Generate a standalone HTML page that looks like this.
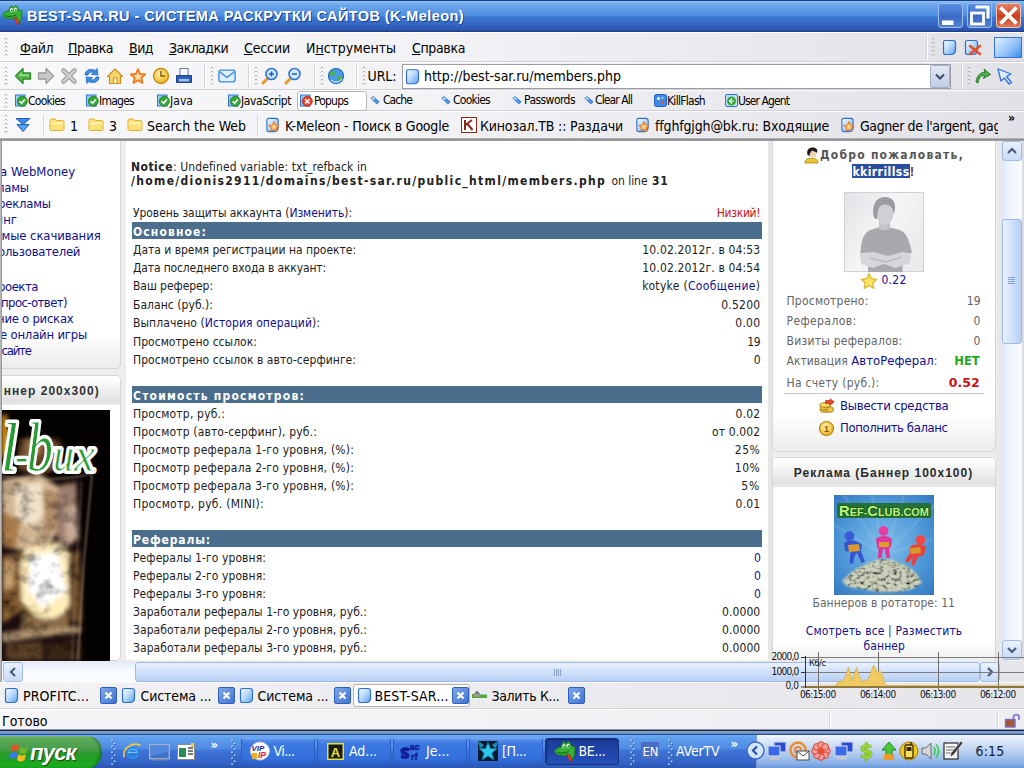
<!DOCTYPE html>
<html lang="ru"><head><meta charset="utf-8"><title>BEST-SAR.RU - СИСТЕМА РАСКРУТКИ САЙТОВ (K-Meleon)</title>
<style>
html,body{margin:0;padding:0;width:1024px;height:768px;overflow:hidden;background:#f1f1f1;}
body{position:relative;font-family:"DejaVu Sans Condensed","Liberation Sans",sans-serif;}
div,svg,span.t{position:absolute;}
span.t{white-space:pre;}
a{color:#10108a;text-decoration:none;}
u{text-decoration:underline;}
</style></head><body>
<div style="left:0px;top:0px;width:1024px;height:32px;background:linear-gradient(#1a3f8a 0,#1a3f8a .8px,#8ec2f8 1px,#78b2ea 3px,#6aa2ea 6px,#5a98e6 11px,#4c8ee0 16px,#3b78d0 17px,#3870ca 21px,#3364c2 25px,#2e58b2 29px,#2850a6 30.500px,#1e3f8e 31px,#1e3f8e 32px);"></div>
<div style="left:0px;top:32px;width:1024px;height:1px;background:#fff;z-index:1;"></div>
<svg style="left:2px;top:5px;" width="21" height="20" viewBox="0 0 21 20"><path d="M0.500 9.500 C2 7.500 4.500 6 7 5.500 L8 2 L10 .8 L11.500 3 L13.500 .5 L15.500 2 L16 4.500 L20 5.500 L19.500 13 L17.500 18 L14.500 13 L9 14 L4 13 C2 12.500 1 11 0.500 9.500Z" fill="#35b035" stroke="#1f7a1f" stroke-width=".9" stroke-linejoin="round"/><path d="M12 12.500 L14.500 12.500 L17.500 19 L15 19.500Z" fill="#e0452f" stroke="#8a2416" stroke-width=".6"/><ellipse cx="9.500" cy="5" rx="1.500" ry="1.900" fill="#eaffea"/><ellipse cx="13.500" cy="4.500" rx="1.500" ry="1.900" fill="#eaffea"/><circle cx="9.800" cy="5.500" r=".8" fill="#0a3a0a"/><circle cx="13.800" cy="5" r=".8" fill="#0a3a0a"/><path d="M3 10.500 C6 12 10 12 14 10" fill="none" stroke="#0f5a0f" stroke-width=".9"/></svg>
<span class="t" style='left:27.00px;top:6.48px;font-size:14.5px;line-height:20px;color:#fff;font-weight:700;font-family:"Liberation Sans",sans-serif;letter-spacing:0.429px;text-shadow:1px 1px 0 #1a3f8f;'>BEST-SAR.RU - СИСТЕМА РАСКРУТКИ САЙТОВ (K-Meleon)</span>
<div style="left:938px;top:3px;width:25px;height:25px;border-radius:3px;border:1px solid #9dbdf0;box-sizing:border-box;background:linear-gradient(#5c8fe0,#3f72cc 45%,#3a6ac4 55%,#5484d4);"></div>
<svg style="left:938px;top:3px;" width="25" height="25" viewBox="0 0 25 25"><rect x="4" y="17.500" width="11.500" height="4.500" fill="#fff"/></svg>
<div style="left:967px;top:3px;width:25px;height:25px;border-radius:3px;border:1px solid #9dbdf0;box-sizing:border-box;background:linear-gradient(#5c8fe0,#3f72cc 45%,#3a6ac4 55%,#5484d4);"></div>
<svg style="left:967px;top:3px;" width="25" height="25" viewBox="0 0 25 25"><path d="M8.500 4 H21 V15.500" fill="none" stroke="#fff" stroke-width="3.200"/><rect x="4.500" y="10" width="12" height="11" fill="none" stroke="#fff" stroke-width="2.800"/></svg>
<div style="left:996px;top:3px;width:25px;height:25px;border-radius:3px;border:1px solid #f0c0b0;box-sizing:border-box;background:linear-gradient(#e0836a,#cf4a2c 45%,#c8401f 55%,#dd7a5c);"></div>
<svg style="left:996px;top:3px;" width="25" height="25" viewBox="0 0 25 25"><path d="M4.500 4.500 L20.500 20.500 M20.500 4.500 L4.500 20.500" stroke="#fff" stroke-width="3.800" stroke-linecap="butt"/></svg>
<div style="left:0px;top:32px;width:1024px;height:106px;background:linear-gradient(90deg,#f8f8fa 0,#f3f3f6 40%,#e9e8ed 75%,#e2e1e7 100%);"></div>
<div style="left:0px;top:61px;width:1024px;height:1px;background:#cfcfd4;"></div>
<div style="left:0px;top:62px;width:1024px;height:1px;background:#fcfcfd;"></div>
<div style="left:0px;top:89px;width:1024px;height:1px;background:#cfcfd4;"></div>
<div style="left:0px;top:90px;width:1024px;height:1px;background:#fcfcfd;"></div>
<div style="left:0px;top:110px;width:1024px;height:1px;background:#cfcfd4;"></div>
<div style="left:0px;top:111px;width:1024px;height:1px;background:#fcfcfd;"></div>
<svg style="left:4px;top:37px;" width="4" height="22" viewBox="0 0 4 22"><path d="M0.5 2.5 L2 1 L3.5 2.5" fill="none" stroke="#b4b0aa" stroke-width="1"/><path d="M0.5 6.5 L2 5 L3.5 6.5" fill="none" stroke="#b4b0aa" stroke-width="1"/><path d="M0.5 10.5 L2 9 L3.5 10.5" fill="none" stroke="#b4b0aa" stroke-width="1"/><path d="M0.5 14.5 L2 13 L3.5 14.5" fill="none" stroke="#b4b0aa" stroke-width="1"/><path d="M0.5 18.5 L2 17 L3.5 18.5" fill="none" stroke="#b4b0aa" stroke-width="1"/></svg>
<span class="t" style='left:20.00px;top:37.85px;font-size:14px;line-height:20px;color:#000;letter-spacing:-0.449px;'><u>Ф</u>айл</span>
<span class="t" style='left:68.00px;top:37.85px;font-size:14px;line-height:20px;color:#000;letter-spacing:-0.492px;'><u>П</u>равка</span>
<span class="t" style='left:129.00px;top:37.85px;font-size:14px;line-height:20px;color:#000;letter-spacing:-0.516px;'><u>В</u>ид</span>
<span class="t" style='left:169.00px;top:37.85px;font-size:14px;line-height:20px;color:#000;letter-spacing:-0.586px;'><u>З</u>акладки</span>
<span class="t" style='left:244.00px;top:37.85px;font-size:14px;line-height:20px;color:#000;letter-spacing:-0.130px;'><u>С</u>ессии</span>
<span class="t" style='left:306.00px;top:37.85px;font-size:14px;line-height:20px;color:#000;letter-spacing:-0.014px;'>И<u>н</u>струменты</span>
<span class="t" style='left:412.00px;top:37.85px;font-size:14px;line-height:20px;color:#000;letter-spacing:-0.359px;'><u>С</u>правка</span>
<div style="left:926px;top:34px;width:1px;height:26px;background:#d6d6da;"></div>
<div style="left:927px;top:34px;width:1px;height:26px;background:#fdfdfe;"></div>
<svg style="left:931px;top:37px;" width="4" height="22" viewBox="0 0 4 22"><path d="M0.5 2.5 L2 1 L3.5 2.5" fill="none" stroke="#b4b0aa" stroke-width="1"/><path d="M0.5 6.5 L2 5 L3.5 6.5" fill="none" stroke="#b4b0aa" stroke-width="1"/><path d="M0.5 10.5 L2 9 L3.5 10.5" fill="none" stroke="#b4b0aa" stroke-width="1"/><path d="M0.5 14.5 L2 13 L3.5 14.5" fill="none" stroke="#b4b0aa" stroke-width="1"/><path d="M0.5 18.5 L2 17 L3.5 18.5" fill="none" stroke="#b4b0aa" stroke-width="1"/></svg>
<svg width="0" height="0" style="left:0;top:0"><defs><linearGradient id="pg" x1="0" y1="0" x2="1" y2="1"><stop offset="0" stop-color="#f6fbff"/><stop offset="0.45" stop-color="#bedcfa"/><stop offset="1" stop-color="#5aa2ee"/></linearGradient><linearGradient id="bl" x1="0" y1="0" x2="1" y2="1"><stop offset="0" stop-color="#e8f3ff"/><stop offset="0.6" stop-color="#8fc0f6"/><stop offset="1" stop-color="#3f8be8"/></linearGradient><radialGradient id="gold" cx="0.4" cy="0.35" r="0.7"><stop offset="0" stop-color="#fff3a8"/><stop offset="1" stop-color="#e8ae1c"/></radialGradient></defs></svg>
<svg style="left:941.5px;top:38.5px;" width="15" height="17" viewBox="0 0 15 17"><path d="M3.5 1.5 H11 Q13.5 1.5 13.5 4 V11 Q13.5 15.5 9 15.5 H3.5 Q1.5 15.5 1.5 13.5 V3.5 Q1.5 1.5 3.5 1.5Z" fill="url(#pg)" stroke="#2f6fd0" stroke-width="1.2"/></svg>
<svg style="left:963.5px;top:38.5px;" width="15" height="17" viewBox="0 0 15 17"><path d="M3.5 1.5 H11 Q13.5 1.5 13.5 4 V11 Q13.5 15.5 9 15.5 H3.5 Q1.5 15.5 1.5 13.5 V3.5 Q1.5 1.5 3.5 1.5Z" fill="url(#pg)" stroke="#2f6fd0" stroke-width="1.2"/></svg>
<svg style="left:968px;top:44px;" width="14" height="12" viewBox="0 0 14 12"><path d="M2 2 L12 10 M12 2 L2 10" stroke="#e8502a" stroke-width="2.6" stroke-linecap="round"/></svg>
<div style="left:994px;top:37px;width:28px;height:21px;background:linear-gradient(135deg,#e4f1ff,#8ec0f8 60%,#3f8cec);border:1px solid #2f74d8;box-sizing:border-box;"></div>
<svg style="left:4px;top:66px;" width="4" height="22" viewBox="0 0 4 22"><path d="M0.5 2.5 L2 1 L3.5 2.5" fill="none" stroke="#b4b0aa" stroke-width="1"/><path d="M0.5 6.5 L2 5 L3.5 6.5" fill="none" stroke="#b4b0aa" stroke-width="1"/><path d="M0.5 10.5 L2 9 L3.5 10.5" fill="none" stroke="#b4b0aa" stroke-width="1"/><path d="M0.5 14.5 L2 13 L3.5 14.5" fill="none" stroke="#b4b0aa" stroke-width="1"/><path d="M0.5 18.5 L2 17 L3.5 18.5" fill="none" stroke="#b4b0aa" stroke-width="1"/></svg>
<svg style="left:14px;top:67px;" width="18" height="18" viewBox="0 0 18 18"><path d="M1.5 9 L9 1.5 V6 H16.5 V12 H9 V16.5Z" fill="#55b84a" stroke="#2e8a2a" stroke-width="1.3" stroke-linejoin="round"/><path d="M4 9 L8 5 V7.3 H15 V9Z" fill="#a6e49a" opacity=".8"/></svg>
<svg style="left:37px;top:67px;" width="18" height="18" viewBox="0 0 18 18"><path d="M16.5 9 L9 1.5 V6 H1.5 V12 H9 V16.5Z" fill="#c9c9c9" stroke="#9c9c9c" stroke-width="1.3" stroke-linejoin="round"/></svg>
<svg style="left:60px;top:67px;" width="18" height="18" viewBox="0 0 18 18"><path d="M3.500 3.500 L14.500 14.500 M14.500 3.500 L3.500 14.500" stroke="#a2a2a2" stroke-width="4.600" stroke-linecap="round"/><path d="M3.500 3.500 L14.500 14.500 M14.500 3.500 L3.500 14.500" stroke="#cfcfcf" stroke-width="2.400" stroke-linecap="round"/></svg>
<svg style="left:83px;top:67px;" width="18" height="18" viewBox="0 0 18 18"><path d="M2 8 C2 3 8 1 12 3.5 L14 1.5 L15 8 L8.5 7.5 L10.5 5.5 C8 4.5 5.5 5.5 5 8Z" fill="#3c8ee6" stroke="#1f63c2" stroke-width=".8"/><path d="M16 10 C16 15 10 17 6 14.5 L4 16.5 L3 10 L9.500 10.5 L7.500 12.5 C10 13.500 12.5 12.5 13 10Z" fill="#3c8ee6" stroke="#1f63c2" stroke-width=".8"/></svg>
<svg style="left:106px;top:67px;" width="18" height="18" viewBox="0 0 18 18"><path d="M1.500 9.500 L9 2 L16.5 9.500 H14.5 V16.5 H3.500 V9.500Z" fill="#f7d46a" stroke="#c8901a" stroke-width="1.2" stroke-linejoin="round"/><rect x="7.500" y="11" width="3.500" height="5.500" fill="#fff4c8" stroke="#c8901a" stroke-width="1"/></svg>
<svg style="left:129px;top:67px;" width="18" height="18" viewBox="0 0 18 18"><path d="M9 2.200 L11 7 L16.200 7.400 L12.300 10.800 L13.500 15.900 L9 13.200 L4.500 15.900 L5.700 10.800 L1.800 7.400 L7 7Z" fill="#ffdcae" stroke="#f07a1c" stroke-width="1.900" stroke-linejoin="round"/></svg>
<svg style="left:152px;top:67px;" width="18" height="18" viewBox="0 0 18 18"><circle cx="9" cy="9" r="7.500" fill="url(#gold)" stroke="#c88a10" stroke-width="1.300"/><path d="M9 4 V9 H13" fill="none" stroke="#8a5a08" stroke-width="1.500"/></svg>
<svg style="left:175px;top:67px;" width="18" height="18" viewBox="0 0 18 18"><rect x="5" y="1.500" width="8" height="7" fill="#fff" stroke="#5a7ab0" stroke-width="1"/><path d="M1.500 8.500 H16.500 V15.500 H1.500Z" fill="#2f5fb8" stroke="#1c3f8a" stroke-width="1"/><rect x="4" y="12" width="10" height="2.500" fill="#9fc0f0"/></svg>
<div style="left:204px;top:64px;width:1px;height:24px;background:#d6d6da;"></div>
<div style="left:205px;top:64px;width:1px;height:24px;background:#fdfdfe;"></div>
<svg style="left:210px;top:66px;" width="4" height="22" viewBox="0 0 4 22"><path d="M0.5 2.5 L2 1 L3.5 2.5" fill="none" stroke="#b4b0aa" stroke-width="1"/><path d="M0.5 6.5 L2 5 L3.5 6.5" fill="none" stroke="#b4b0aa" stroke-width="1"/><path d="M0.5 10.5 L2 9 L3.5 10.5" fill="none" stroke="#b4b0aa" stroke-width="1"/><path d="M0.5 14.5 L2 13 L3.5 14.5" fill="none" stroke="#b4b0aa" stroke-width="1"/><path d="M0.5 18.5 L2 17 L3.5 18.5" fill="none" stroke="#b4b0aa" stroke-width="1"/></svg>
<svg style="left:218px;top:69px;" width="18" height="14" viewBox="0 0 20 15"><rect x="1" y="1" width="18" height="13" rx="2.500" fill="#dff0ff" stroke="#3a8ae6" stroke-width="1.500"/><path d="M2 3 L10 9 L18 3" fill="none" stroke="#3a8ae6" stroke-width="1.400"/></svg>
<div style="left:248px;top:64px;width:1px;height:24px;background:#d6d6da;"></div>
<div style="left:249px;top:64px;width:1px;height:24px;background:#fdfdfe;"></div>
<svg style="left:254px;top:66px;" width="4" height="22" viewBox="0 0 4 22"><path d="M0.5 2.5 L2 1 L3.5 2.5" fill="none" stroke="#b4b0aa" stroke-width="1"/><path d="M0.5 6.5 L2 5 L3.5 6.5" fill="none" stroke="#b4b0aa" stroke-width="1"/><path d="M0.5 10.5 L2 9 L3.5 10.5" fill="none" stroke="#b4b0aa" stroke-width="1"/><path d="M0.5 14.5 L2 13 L3.5 14.5" fill="none" stroke="#b4b0aa" stroke-width="1"/><path d="M0.5 18.5 L2 17 L3.5 18.5" fill="none" stroke="#b4b0aa" stroke-width="1"/></svg>
<svg style="left:261px;top:67px;" width="18" height="18" viewBox="0 0 18 18"><path d="M6.500 11.500 L2 16" stroke="#e89a28" stroke-width="3" stroke-linecap="round"/><circle cx="10.500" cy="7" r="5.500" fill="#d4e8fc" stroke="#2f74d8" stroke-width="1.600"/><path d="M8 7 H13" stroke="#1f5fc2" stroke-width="1.600"/><path d="M10.500 4.500 V9.500" stroke="#1f5fc2" stroke-width="1.600"/></svg>
<svg style="left:284px;top:67px;" width="18" height="18" viewBox="0 0 18 18"><path d="M6.500 11.500 L2 16" stroke="#e89a28" stroke-width="3" stroke-linecap="round"/><circle cx="10.500" cy="7" r="5.500" fill="#d4e8fc" stroke="#2f74d8" stroke-width="1.600"/><path d="M8 7 H13" stroke="#1f5fc2" stroke-width="1.600"/></svg>
<div style="left:314px;top:64px;width:1px;height:24px;background:#d6d6da;"></div>
<div style="left:315px;top:64px;width:1px;height:24px;background:#fdfdfe;"></div>
<svg style="left:320px;top:66px;" width="4" height="22" viewBox="0 0 4 22"><path d="M0.5 2.5 L2 1 L3.5 2.5" fill="none" stroke="#b4b0aa" stroke-width="1"/><path d="M0.5 6.5 L2 5 L3.5 6.5" fill="none" stroke="#b4b0aa" stroke-width="1"/><path d="M0.5 10.5 L2 9 L3.5 10.5" fill="none" stroke="#b4b0aa" stroke-width="1"/><path d="M0.5 14.5 L2 13 L3.5 14.5" fill="none" stroke="#b4b0aa" stroke-width="1"/><path d="M0.5 18.5 L2 17 L3.5 18.5" fill="none" stroke="#b4b0aa" stroke-width="1"/></svg>
<svg style="left:327px;top:67px;" width="18" height="18" viewBox="0 0 18 18"><circle cx="9" cy="9" r="7.500" fill="#4a9ae8" stroke="#1f63c2" stroke-width="1.200"/><path d="M5 4 C8 3 9 6 7 8 C5 9 4 8 3 10 C2 7 3 5 5 4Z M10 9 C13 8 15 10 14 13 C12 15 10 14 10 12Z" fill="#4fb04a"/><path d="M4 13 C7 16 12 16 15 12" fill="none" stroke="#bfe0ff" stroke-width="1.200"/></svg>
<div style="left:356px;top:64px;width:1px;height:24px;background:#d6d6da;"></div>
<div style="left:357px;top:64px;width:1px;height:24px;background:#fdfdfe;"></div>
<svg style="left:362px;top:66px;" width="4" height="22" viewBox="0 0 4 22"><path d="M0.5 2.5 L2 1 L3.5 2.5" fill="none" stroke="#b4b0aa" stroke-width="1"/><path d="M0.5 6.5 L2 5 L3.5 6.5" fill="none" stroke="#b4b0aa" stroke-width="1"/><path d="M0.5 10.5 L2 9 L3.5 10.5" fill="none" stroke="#b4b0aa" stroke-width="1"/><path d="M0.5 14.5 L2 13 L3.5 14.5" fill="none" stroke="#b4b0aa" stroke-width="1"/><path d="M0.5 18.5 L2 17 L3.5 18.5" fill="none" stroke="#b4b0aa" stroke-width="1"/></svg>
<span class="t" style='left:367.50px;top:66.15px;font-size:14px;line-height:20px;color:#000;letter-spacing:-0.059px;'>URL:</span>
<div style="left:402px;top:63.5px;width:549px;height:25.5px;background:#fff;border:1px solid #9c9ca8;box-sizing:border-box;"></div>
<svg style="left:405px;top:67.5px;" width="15" height="17.5" viewBox="0 0 15 17"><path d="M3.5 1.5 H11 Q13.5 1.5 13.5 4 V11 Q13.5 15.5 9 15.5 H3.5 Q1.5 15.5 1.5 13.5 V3.5 Q1.5 1.5 3.5 1.5Z" fill="url(#pg)" stroke="#2f6fd0" stroke-width="1.2"/></svg>
<span class="t" style='left:424.00px;top:66.35px;font-size:14px;line-height:20px;color:#000;letter-spacing:-0.024px;'>http://best-sar.ru/members.php</span>
<div style="left:930px;top:65px;width:20px;height:23px;background:linear-gradient(#e2e8f4,#c2cee4);border:1px solid #a4b2cc;box-sizing:border-box;border-radius:2px;"></div>
<svg style="left:930px;top:66px;" width="20" height="21" viewBox="0 0 20 21"><path d="M6 8.500 L10 12.500 L14 8.500" fill="none" stroke="#3a4a6a" stroke-width="2"/></svg>
<div style="left:961px;top:64px;width:1px;height:24px;background:#d6d6da;"></div>
<div style="left:962px;top:64px;width:1px;height:24px;background:#fdfdfe;"></div>
<svg style="left:967px;top:66px;" width="4" height="22" viewBox="0 0 4 22"><path d="M0.5 2.5 L2 1 L3.5 2.5" fill="none" stroke="#b4b0aa" stroke-width="1"/><path d="M0.5 6.5 L2 5 L3.5 6.5" fill="none" stroke="#b4b0aa" stroke-width="1"/><path d="M0.5 10.5 L2 9 L3.5 10.5" fill="none" stroke="#b4b0aa" stroke-width="1"/><path d="M0.5 14.5 L2 13 L3.5 14.5" fill="none" stroke="#b4b0aa" stroke-width="1"/><path d="M0.5 18.5 L2 17 L3.5 18.5" fill="none" stroke="#b4b0aa" stroke-width="1"/></svg>
<svg style="left:974px;top:67px;" width="18" height="18" viewBox="0 0 18 18"><path d="M2 15 C3 8 7 5 11 5.500 L10 2 L16.500 7.500 L9.500 11.500 L10.500 8.500 C7 8.500 5 10 4 16Z" fill="#4fb04a" stroke="#2a7a28" stroke-width="1"/></svg>
<svg style="left:996px;top:67px;" width="18" height="18" viewBox="0 0 18 18"><path d="M2 2 L15 7 L10.500 9.500 L15.500 15.500 L13 17 L8.500 11 L5 14Z" fill="#dfeefe" stroke="#2f74d8" stroke-width="1.300" stroke-linejoin="round"/></svg>
<svg style="left:4px;top:93px;" width="4" height="16" viewBox="0 0 4 16"><path d="M0.5 2.5 L2 1 L3.5 2.5" fill="none" stroke="#b4b0aa" stroke-width="1"/><path d="M0.5 6.5 L2 5 L3.5 6.5" fill="none" stroke="#b4b0aa" stroke-width="1"/><path d="M0.5 10.5 L2 9 L3.5 10.5" fill="none" stroke="#b4b0aa" stroke-width="1"/><path d="M0.5 14.5 L2 13 L3.5 14.5" fill="none" stroke="#b4b0aa" stroke-width="1"/></svg>
<svg style="left:15px;top:94px;" width="14" height="14" viewBox="0 0 14 14"><rect x="0.500" y="1" width="9.500" height="11" fill="#9ccaf6" stroke="#2f74d8" stroke-width="1"/><circle cx="7.300" cy="7.300" r="5" fill="#35a835" stroke="#1d7a1d" stroke-width=".8"/><path d="M4.600 7.300 L6.600 9.300 L10 5.300" fill="none" stroke="#fff" stroke-width="1.600"/></svg>
<span class="t" style='left:28.00px;top:92.84px;font-size:12px;line-height:16px;color:#000;letter-spacing:-0.754px;'>Cookies</span>
<svg style="left:86px;top:94px;" width="14" height="14" viewBox="0 0 14 14"><rect x="0.500" y="1" width="9.500" height="11" fill="#9ccaf6" stroke="#2f74d8" stroke-width="1"/><circle cx="7.300" cy="7.300" r="5" fill="#35a835" stroke="#1d7a1d" stroke-width=".8"/><path d="M4.600 7.300 L6.600 9.300 L10 5.300" fill="none" stroke="#fff" stroke-width="1.600"/></svg>
<span class="t" style='left:99.00px;top:92.84px;font-size:12px;line-height:16px;color:#000;letter-spacing:-0.742px;'>Images</span>
<svg style="left:157px;top:94px;" width="14" height="14" viewBox="0 0 14 14"><rect x="0.500" y="1" width="9.500" height="11" fill="#9ccaf6" stroke="#2f74d8" stroke-width="1"/><circle cx="7.300" cy="7.300" r="5" fill="#35a835" stroke="#1d7a1d" stroke-width=".8"/><path d="M4.600 7.300 L6.600 9.300 L10 5.300" fill="none" stroke="#fff" stroke-width="1.600"/></svg>
<span class="t" style='left:170.00px;top:92.84px;font-size:12px;line-height:16px;color:#000;letter-spacing:0.047px;'>Java</span>
<svg style="left:228px;top:94px;" width="14" height="14" viewBox="0 0 14 14"><rect x="0.500" y="1" width="9.500" height="11" fill="#9ccaf6" stroke="#2f74d8" stroke-width="1"/><circle cx="7.300" cy="7.300" r="5" fill="#35a835" stroke="#1d7a1d" stroke-width=".8"/><path d="M4.600 7.300 L6.600 9.300 L10 5.300" fill="none" stroke="#fff" stroke-width="1.600"/></svg>
<span class="t" style='left:241.00px;top:92.84px;font-size:12px;line-height:16px;color:#000;letter-spacing:-0.412px;'>JavaScript</span>
<div style="left:297px;top:91px;width:70px;height:20px;background:#fff;border:1px solid #b8b8b8;border-radius:3px;box-sizing:border-box;"></div>
<svg style="left:300px;top:94px;" width="14" height="14" viewBox="0 0 14 14"><rect x="0.500" y="1" width="9.500" height="11" fill="#9ccaf6" stroke="#2f74d8" stroke-width="1"/><circle cx="7.300" cy="7.300" r="5" fill="#e8452a" stroke="#b02a14" stroke-width=".8"/><path d="M5.200 5.200 L9.400 9.400 M9.400 5.200 L5.200 9.400" stroke="#fff" stroke-width="1.500"/></svg>
<span class="t" style='left:314.00px;top:92.84px;font-size:12px;line-height:16px;color:#000;letter-spacing:-0.812px;'>Popups</span>
<svg style="left:370px;top:96px;" width="10" height="9" viewBox="0 0 10 9"><path d="M.8 2.200 L3.200 .6 L9.200 5.800 L6.800 8 Z" fill="#4a94ea" stroke="#2a6ac8" stroke-width=".7" stroke-linejoin="round"/><path d="M1.500 2.300 L3.200 1.200 L5 2.800 L3.300 4Z" fill="#cfe6ff"/></svg>
<span class="t" style='left:383.00px;top:91.84px;font-size:12px;line-height:16px;color:#000;letter-spacing:-0.919px;'>Cache</span>
<svg style="left:441px;top:96px;" width="10" height="9" viewBox="0 0 10 9"><path d="M.8 2.200 L3.200 .6 L9.200 5.800 L6.800 8 Z" fill="#4a94ea" stroke="#2a6ac8" stroke-width=".7" stroke-linejoin="round"/><path d="M1.500 2.300 L3.200 1.200 L5 2.800 L3.300 4Z" fill="#cfe6ff"/></svg>
<span class="t" style='left:453.00px;top:91.84px;font-size:12px;line-height:16px;color:#000;letter-spacing:-0.754px;'>Cookies</span>
<svg style="left:512px;top:96px;" width="10" height="9" viewBox="0 0 10 9"><path d="M.8 2.200 L3.200 .6 L9.200 5.800 L6.800 8 Z" fill="#4a94ea" stroke="#2a6ac8" stroke-width=".7" stroke-linejoin="round"/><path d="M1.500 2.300 L3.200 1.200 L5 2.800 L3.300 4Z" fill="#cfe6ff"/></svg>
<span class="t" style='left:524.00px;top:91.84px;font-size:12px;line-height:16px;color:#000;letter-spacing:-0.554px;'>Passwords</span>
<svg style="left:584px;top:96px;" width="10" height="9" viewBox="0 0 10 9"><path d="M.8 2.200 L3.200 .6 L9.200 5.800 L6.800 8 Z" fill="#4a94ea" stroke="#2a6ac8" stroke-width=".7" stroke-linejoin="round"/><path d="M1.500 2.300 L3.200 1.200 L5 2.800 L3.300 4Z" fill="#cfe6ff"/></svg>
<span class="t" style='left:595.00px;top:91.84px;font-size:12px;line-height:16px;color:#000;letter-spacing:-0.894px;'>Clear All</span>
<svg style="left:654px;top:94px;" width="13" height="13" viewBox="0 0 13 13"><rect x="0.500" y="0.500" width="12" height="12" rx="2" fill="#3f8ce8" stroke="#1f5fc2"/><circle cx="4.500" cy="4.500" r="1.500" fill="#fff"/><circle cx="8.500" cy="8.500" r="1.500" fill="#f0503a"/><circle cx="8.500" cy="4" r="1" fill="#cfe4fb"/></svg>
<span class="t" style='left:667.00px;top:92.84px;font-size:12px;line-height:16px;color:#000;letter-spacing:-0.708px;'>KillFlash</span>
<svg style="left:725px;top:94px;" width="13" height="13" viewBox="0 0 13 13"><rect x="0.500" y="0.500" width="12" height="12" rx="1.500" fill="#bfe0ff" stroke="#2f74d8"/><circle cx="6.500" cy="7" r="4.500" fill="#35a835"/><path d="M4 7 L9 7 M7 4.500 L4.500 7 L7 9.500" stroke="#fff" stroke-width="1.200" fill="none"/></svg>
<span class="t" style='left:738.00px;top:92.84px;font-size:12px;line-height:16px;color:#000;letter-spacing:-0.900px;'>User Agent</span>
<svg style="left:4px;top:114px;" width="4" height="20" viewBox="0 0 4 20"><path d="M0.5 2.5 L2 1 L3.5 2.5" fill="none" stroke="#b4b0aa" stroke-width="1"/><path d="M0.5 6.5 L2 5 L3.5 6.5" fill="none" stroke="#b4b0aa" stroke-width="1"/><path d="M0.5 10.5 L2 9 L3.5 10.5" fill="none" stroke="#b4b0aa" stroke-width="1"/><path d="M0.5 14.5 L2 13 L3.5 14.5" fill="none" stroke="#b4b0aa" stroke-width="1"/><path d="M0.5 18.5 L2 17 L3.5 18.5" fill="none" stroke="#b4b0aa" stroke-width="1"/></svg>
<svg style="left:15px;top:117px;" width="16" height="16" viewBox="0 0 16 16"><path d="M1 1.500 H15 L8 7.500Z" fill="#3f8ce8" stroke="#1f5fc2" stroke-width="1"/><path d="M2 7.500 H14 L8 14.500Z" fill="#5aa2f0" stroke="#1f5fc2" stroke-width="1"/></svg>
<div style="left:43px;top:115px;width:1px;height:20px;background:#d6d6da;"></div>
<div style="left:44px;top:115px;width:1px;height:20px;background:#fdfdfe;"></div>
<svg style="left:49px;top:117px;" width="16" height="15" viewBox="0 0 16 15"><path d="M1 3.500 Q1 2 2.500 2 H6 L7.500 3.500 H13.500 Q15 3.500 15 5 V12 Q15 13.500 13.500 13.500 H2.500 Q1 13.500 1 12Z" fill="#fbe27a" stroke="#e0b02a" stroke-width="1"/><path d="M1.500 6.500 H14.500" stroke="#fff6c0" stroke-width="1.500"/></svg>
<span class="t" style='left:70.00px;top:115.85px;font-size:14px;line-height:20px;color:#000;letter-spacing:-1.016px;'>1</span>
<svg style="left:88px;top:117px;" width="16" height="15" viewBox="0 0 16 15"><path d="M1 3.500 Q1 2 2.500 2 H6 L7.500 3.500 H13.500 Q15 3.500 15 5 V12 Q15 13.500 13.500 13.500 H2.500 Q1 13.500 1 12Z" fill="#fbe27a" stroke="#e0b02a" stroke-width="1"/><path d="M1.500 6.500 H14.500" stroke="#fff6c0" stroke-width="1.500"/></svg>
<span class="t" style='left:109.00px;top:115.85px;font-size:14px;line-height:20px;color:#000;letter-spacing:-0.016px;'>3</span>
<svg style="left:127px;top:117px;" width="16" height="15" viewBox="0 0 16 15"><path d="M1 3.500 Q1 2 2.500 2 H6 L7.500 3.500 H13.500 Q15 3.500 15 5 V12 Q15 13.500 13.500 13.500 H2.500 Q1 13.500 1 12Z" fill="#fbe27a" stroke="#e0b02a" stroke-width="1"/><path d="M1.500 6.500 H14.500" stroke="#fff6c0" stroke-width="1.500"/></svg>
<span class="t" style='left:147.00px;top:115.85px;font-size:14px;line-height:20px;color:#000;letter-spacing:-0.022px;'>Search the Web</span>
<div style="left:257px;top:115px;width:1px;height:20px;background:#d6d6da;"></div>
<div style="left:258px;top:115px;width:1px;height:20px;background:#fdfdfe;"></div>
<svg style="left:265px;top:117px;" width="16" height="16" viewBox="0 0 16 17"><path d="M3.5 1.5 H11 Q13.5 1.5 13.5 4 V11 Q13.5 15.5 9 15.5 H3.5 Q1.5 15.5 1.5 13.5 V3.5 Q1.5 1.5 3.5 1.5Z" fill="url(#pg)" stroke="#2f6fd0" stroke-width="1.2"/><path d="M10 6.500 L11.500 10 L15.300 10.300 L12.400 12.800 L13.300 16.500 L10 14.500 L6.700 16.500 L7.600 12.800 L4.700 10.300 L8.500 10Z" fill="#ffd28a" stroke="#f07a1c" stroke-width="1.200" stroke-linejoin="round" transform="translate(-1,-1.500)"/></svg>
<span class="t" style='left:285.00px;top:115.85px;font-size:14px;line-height:20px;color:#000;letter-spacing:-0.207px;'>K-Meleon - Поиск в Google</span>
<svg style="left:461px;top:117px;" width="16" height="16" viewBox="0 0 16 16"><rect x="0.500" y="0.500" width="15" height="15" fill="#fff" stroke="#8a2a1a" stroke-width="1"/><path d="M4 3 V13 M4.500 8 L11 3 M6.500 7 L11.500 13" stroke="#8a2a1a" stroke-width="2" fill="none"/></svg>
<span class="t" style='left:480.00px;top:115.85px;font-size:14px;line-height:20px;color:#000;letter-spacing:-0.163px;'>Кинозал.ТВ :: Раздачи</span>
<svg style="left:635px;top:117px;" width="16" height="16" viewBox="0 0 16 17"><path d="M3.5 1.5 H11 Q13.5 1.5 13.5 4 V11 Q13.5 15.5 9 15.5 H3.5 Q1.5 15.5 1.5 13.5 V3.5 Q1.5 1.5 3.5 1.5Z" fill="url(#pg)" stroke="#2f6fd0" stroke-width="1.2"/><path d="M10 6.500 L11.500 10 L15.300 10.300 L12.400 12.800 L13.300 16.500 L10 14.500 L6.700 16.500 L7.600 12.800 L4.700 10.300 L8.500 10Z" fill="#ffd28a" stroke="#f07a1c" stroke-width="1.200" stroke-linejoin="round" transform="translate(-1,-1.500)"/></svg>
<span class="t" style='left:655.00px;top:115.85px;font-size:14px;line-height:20px;color:#000;letter-spacing:-0.150px;'>ffghfgjgh@bk.ru: Входящие</span>
<svg style="left:840px;top:117px;" width="16" height="16" viewBox="0 0 16 17"><path d="M3.5 1.5 H11 Q13.5 1.5 13.5 4 V11 Q13.5 15.5 9 15.5 H3.5 Q1.5 15.5 1.5 13.5 V3.5 Q1.5 1.5 3.5 1.5Z" fill="url(#pg)" stroke="#2f6fd0" stroke-width="1.2"/><path d="M10 6.500 L11.500 10 L15.300 10.300 L12.400 12.800 L13.300 16.500 L10 14.500 L6.700 16.500 L7.600 12.800 L4.700 10.300 L8.500 10Z" fill="#ffd28a" stroke="#f07a1c" stroke-width="1.200" stroke-linejoin="round" transform="translate(-1,-1.500)"/></svg>
<div style="left:858px;top:112px;width:140px;height:25px;overflow:hidden;">
<span class="t" style='left:2.00px;top:3.85px;font-size:14px;line-height:20px;color:#000;letter-spacing:-0.397px;'>Gagner de l'argent, gag</span>
</div>
<span class="t" style='left:1008.00px;top:110.34px;font-size:12px;line-height:16px;color:#000;font-weight:700;letter-spacing:1.016px;'>»</span>
<div style="left:0px;top:141px;width:1024px;height:519px;background:#ededed;"></div>
<div style="left:1022px;top:141px;width:2px;height:542px;background:#dcdce0;"></div>
<div style="left:126px;top:141px;width:642px;height:519px;background:#fff;"></div>
<div style="left:768px;top:141px;width:5px;height:519px;background:#e6e6e6;"></div>
<div style="left:-10px;top:138px;width:131px;height:231px;background:linear-gradient(#fff 0,#fff 85%,#ececec 100%);border:1px solid #d6d6d6;border-top:none;border-radius:0 0 5px 5px;box-sizing:border-box;"></div>
<div style="left:2px;top:141px;width:119px;height:228px;overflow:hidden;">
<span class="t" style='left:-2.00px;top:22.50px;font-size:13px;line-height:16px;color:#10108a;letter-spacing:0.011px;'>а WebMoney</span>
<span class="t" style='left:-5.00px;top:38.50px;font-size:13px;line-height:16px;color:#10108a;letter-spacing:-0.226px;'>ламы</span>
<span class="t" style='left:-4.00px;top:54.50px;font-size:13px;line-height:16px;color:#10108a;letter-spacing:-0.229px;'>рекламы</span>
<span class="t" style='left:-6.50px;top:70.50px;font-size:13px;line-height:16px;color:#10108a;letter-spacing:0.031px;'>инг</span>
<span class="t" style='left:-0.50px;top:86.50px;font-size:13px;line-height:16px;color:#10108a;letter-spacing:-0.099px;'>мые скачивания</span>
<span class="t" style='left:-4.00px;top:102.50px;font-size:13px;line-height:16px;color:#10108a;letter-spacing:-0.254px;'>ользователей</span>
<span class="t" style='left:-4.00px;top:137.50px;font-size:13px;line-height:16px;color:#10108a;letter-spacing:-0.471px;'>роекта</span>
<span class="t" style='left:-1.00px;top:153.50px;font-size:13px;line-height:16px;color:#10108a;letter-spacing:-0.574px;'>прос-ответ)</span>
<span class="t" style='left:-5.00px;top:169.50px;font-size:13px;line-height:16px;color:#10108a;letter-spacing:-0.262px;'>ние о рисках</span>
<span class="t" style='left:-2.00px;top:185.50px;font-size:13px;line-height:16px;color:#10108a;letter-spacing:-0.210px;'>е онлайн игры</span>
<span class="t" style='left:-0.50px;top:201.50px;font-size:13px;line-height:16px;color:#10108a;letter-spacing:-1.200px;'>сайте</span>
</div>
<div style="left:-10px;top:375px;width:131px;height:286px;background:#fff;border:1px solid #d6d6d6;border-radius:5px;box-sizing:border-box;"></div>
<div style="left:-9px;top:376px;width:129px;height:29px;background:linear-gradient(#fff 0,#fcfcfc 15%,#e2e2e2 85%,#e8e8e8 100%);border-radius:4px 4px 0 0;"></div>
<span class="t" style='left:3.70px;top:382.84px;font-size:12px;line-height:16px;color:#333;font-weight:700;font-family:"Liberation Sans",sans-serif;letter-spacing:1.035px;'>ннер 200x300)</span>
<svg style="left:2px;top:410px" width="108" height="251" viewBox="0 0 108 251"><defs><filter id="ice" x="-10%" y="-10%" width="120%" height="120%"><feGaussianBlur in="SourceGraphic" stdDeviation="2.2" result="b"/><feTurbulence type="fractalNoise" baseFrequency=".06 .07" numOctaves="3" seed="7" result="n"/><feColorMatrix in="n" type="matrix" values="1.9 0 0 0 -.05  1.9 0 0 0 -.05  1.9 0 0 0 -.05  0 0 0 0 1" result="g"/><feComposite in="b" in2="g" operator="arithmetic" k1="1" k2="0" k3="0" k4="0"/></filter><filter id="b6" x="-20%" y="-20%" width="140%" height="140%"><feGaussianBlur stdDeviation="5"/></filter><filter id="b1"><feGaussianBlur stdDeviation=".8"/></filter></defs><rect width="108" height="251" fill="#040201"/><g filter="url(#b6)"><rect x="-6" y="66" width="86" height="200" fill="#1c0f07"/><ellipse cx="44" cy="172" rx="28" ry="36" fill="#9a742c"/></g><g filter="url(#ice)"><path d="M17 30 L34 26 L58 30 L61 58 L40 64 L16 60Z" fill="#7a5230"/><path d="M22 32 L36 29 L38 44 L24 46Z" fill="#a8845a"/><path d="M0 70 L38 64 L58 78 L56 120 L46 138 L16 140 L0 120Z" fill="#d2b692"/><path d="M12 76 L40 72 L46 100 L30 118 L14 106Z" fill="#f2e2c8"/><path d="M0 100 L18 112 L14 140 L0 136Z" fill="#a87c4c"/><path d="M40 78 L56 84 L54 118 L44 128Z" fill="#b08c68"/><path d="M56 76 L74 72 L77 128 L60 142 L54 122Z" fill="#9c7e6c"/><path d="M62 100 L74 94 L75 126 L64 136Z" fill="#c8aa98"/><path d="M22 140 L56 132 L70 146 L70 190 L60 208 L40 212 L20 194 L16 160Z" fill="#ffeebc"/><path d="M28 146 L56 142 L64 182 L40 198 L26 180Z" fill="#ffffff"/><path d="M0 146 L18 142 L20 200 L0 214Z" fill="#8a6236"/><path d="M2 150 L12 148 L12 176 L2 180Z" fill="#c8a070"/><path d="M66 146 L78 140 L80 214 L68 210Z" fill="#6a4828"/><path d="M20 204 L50 210 L66 200 L68 224 L18 226Z" fill="#8a6a44"/><path d="M0 222 L78 216 L80 222 L0 232Z" fill="#b09470"/><path d="M4 234 L40 232 L42 250 L4 250Z" fill="#5a4028"/><path d="M44 234 L78 230 L78 250 L44 250Z" fill="#3a2616"/><path d="M0 6 L5 4 L7 44 L0 50Z" fill="#e8a020"/></g><g filter="url(#b1)" fill="none" stroke="#d8c4a8" stroke-width="1.2" opacity=".65"><path d="M0 66 Q40 74 90 64"/><path d="M90 64 L82 150 L76 250"/><path d="M80 72 L74 160 L70 250" opacity=".5"/></g><g font-family="Liberation Serif,serif" font-style="italic" stroke-linejoin="round"><text y="61" fill="#fff" stroke="#fff" stroke-width="6"><tspan x="-1" font-size="70" textLength="17" lengthAdjust="spacingAndGlyphs">l</tspan><tspan x="13" font-size="44" textLength="13" lengthAdjust="spacingAndGlyphs">-</tspan><tspan x="25" font-size="70" textLength="26" lengthAdjust="spacingAndGlyphs">b</tspan><tspan x="51" font-size="48" textLength="21" lengthAdjust="spacingAndGlyphs">u</tspan><tspan x="72" font-size="48" textLength="21" lengthAdjust="spacingAndGlyphs">x</tspan></text><text y="61" fill="#279a34"><tspan x="-1" font-size="70" textLength="17" lengthAdjust="spacingAndGlyphs">l</tspan><tspan x="13" font-size="44" textLength="13" lengthAdjust="spacingAndGlyphs">-</tspan><tspan x="25" font-size="70" textLength="26" lengthAdjust="spacingAndGlyphs">b</tspan><tspan x="51" font-size="48" textLength="21" lengthAdjust="spacingAndGlyphs">u</tspan><tspan x="72" font-size="48" textLength="21" lengthAdjust="spacingAndGlyphs">x</tspan></text><text y="61" fill="none" stroke="#fff" stroke-width=".9"><tspan x="-1" font-size="70" textLength="17" lengthAdjust="spacingAndGlyphs">l</tspan><tspan x="13" font-size="44" textLength="13" lengthAdjust="spacingAndGlyphs">-</tspan><tspan x="25" font-size="70" textLength="26" lengthAdjust="spacingAndGlyphs">b</tspan><tspan x="51" font-size="48" textLength="21" lengthAdjust="spacingAndGlyphs">u</tspan><tspan x="72" font-size="48" textLength="21" lengthAdjust="spacingAndGlyphs">x</tspan></text></g></svg>
<span class="t" style='left:131.00px;top:159.14px;font-size:12px;line-height:16px;color:#222;font-weight:700;letter-spacing:0.492px;'>Notice</span>
<span class="t" style='left:173.00px;top:159.14px;font-size:12px;line-height:16px;color:#222;letter-spacing:0.103px;'>: Undefined variable: txt_refback in</span>
<span class="t" style='left:131.00px;top:172.84px;font-size:12px;line-height:16px;color:#222;font-weight:700;letter-spacing:1.332px;'>/home/dionis2911/domains/best-sar.ru/public_html/members.php</span>
<span class="t" style='left:611.50px;top:172.84px;font-size:12px;line-height:16px;color:#222;letter-spacing:-0.054px;'>on line</span>
<span class="t" style='left:652.00px;top:172.84px;font-size:12px;line-height:16px;color:#222;font-weight:700;letter-spacing:0.734px;'>31</span>
<span class="t" style='left:133.00px;top:204.84px;font-size:12px;line-height:16px;color:#1c1c1c;letter-spacing:-0.062px;'>Уровень защиты аккаунта (<a>Изменить</a>):</span>
<span class="t" style='left:716.80px;top:204.84px;font-size:12px;line-height:16px;color:#c81414;letter-spacing:-0.321px;'>Низкий!</span>
<div style="left:132px;top:222px;width:630px;height:17px;background:#4b6e8d;"></div>
<span class="t" style='left:133.00px;top:223.84px;font-size:12px;line-height:16px;color:#fff;font-weight:700;letter-spacing:1.132px;'>Основное:</span>
<span class="t" style='left:133.00px;top:241.84px;font-size:12px;line-height:16px;color:#1c1c1c;letter-spacing:-0.022px;'>Дата и время регистрации на проекте:</span>
<span class="t" style='left:642.30px;top:241.84px;font-size:12px;line-height:16px;color:#1c1c1c;letter-spacing:0.139px;'>10.02.2012г. в 04:53</span>
<span class="t" style='left:133.00px;top:259.84px;font-size:12px;line-height:16px;color:#1c1c1c;letter-spacing:-0.147px;'>Дата последнего входа в аккуант:</span>
<span class="t" style='left:642.30px;top:259.84px;font-size:12px;line-height:16px;color:#1c1c1c;letter-spacing:0.139px;'>10.02.2012г. в 04:54</span>
<span class="t" style='left:133.00px;top:277.84px;font-size:12px;line-height:16px;color:#1c1c1c;letter-spacing:-0.059px;'>Ваш реферер:</span>
<span class="t" style='left:642.30px;top:277.84px;font-size:12px;line-height:16px;color:#1c1c1c;letter-spacing:0.315px;'>kotyke (<a>Сообщение</a>)</span>
<span class="t" style='left:133.00px;top:296.84px;font-size:12px;line-height:16px;color:#1c1c1c;letter-spacing:0.046px;'>Баланс (руб.):</span>
<span class="t" style='left:721.30px;top:296.84px;font-size:12px;line-height:16px;color:#1c1c1c;letter-spacing:0.206px;'>0.5200</span>
<span class="t" style='left:133.00px;top:314.84px;font-size:12px;line-height:16px;color:#1c1c1c;letter-spacing:0.085px;'>Выплачено (<a>История операций</a>):</span>
<span class="t" style='left:735.30px;top:314.84px;font-size:12px;line-height:16px;color:#1c1c1c;letter-spacing:0.242px;'>0.00</span>
<span class="t" style='left:133.00px;top:333.84px;font-size:12px;line-height:16px;color:#1c1c1c;letter-spacing:0.041px;'>Просмотрено ссылок:</span>
<span class="t" style='left:747.30px;top:333.84px;font-size:12px;line-height:16px;color:#1c1c1c;letter-spacing:-0.367px;'>19</span>
<span class="t" style='left:133.00px;top:351.84px;font-size:12px;line-height:16px;color:#1c1c1c;letter-spacing:0.050px;'>Просмотрено ссылок в авто-серфинге:</span>
<span class="t" style='left:753.80px;top:351.84px;font-size:12px;line-height:16px;color:#1c1c1c;letter-spacing:-0.375px;'>0</span>
<div style="left:132px;top:386px;width:630px;height:17px;background:#4b6e8d;"></div>
<span class="t" style='left:133.00px;top:387.84px;font-size:12px;line-height:16px;color:#fff;font-weight:700;letter-spacing:1.217px;'>Стоимость просмотров:</span>
<span class="t" style='left:133.00px;top:405.84px;font-size:12px;line-height:16px;color:#1c1c1c;letter-spacing:0.184px;'>Просмотр, руб.:</span>
<span class="t" style='left:735.60px;top:405.84px;font-size:12px;line-height:16px;color:#1c1c1c;letter-spacing:0.167px;'>0.02</span>
<span class="t" style='left:133.00px;top:423.84px;font-size:12px;line-height:16px;color:#1c1c1c;letter-spacing:0.158px;'>Просмотр (авто-серфинг), руб.:</span>
<span class="t" style='left:711.90px;top:423.84px;font-size:12px;line-height:16px;color:#1c1c1c;letter-spacing:0.148px;'>от 0.002</span>
<span class="t" style='left:133.00px;top:441.84px;font-size:12px;line-height:16px;color:#1c1c1c;letter-spacing:0.199px;'>Просмотр реферала 1-го уровня, (%):</span>
<span class="t" style='left:734.80px;top:441.84px;font-size:12px;line-height:16px;color:#1c1c1c;letter-spacing:0.500px;'>25%</span>
<span class="t" style='left:133.00px;top:459.84px;font-size:12px;line-height:16px;color:#1c1c1c;letter-spacing:0.199px;'>Просмотр реферала 2-го уровня, (%):</span>
<span class="t" style='left:734.80px;top:459.84px;font-size:12px;line-height:16px;color:#1c1c1c;letter-spacing:0.500px;'>10%</span>
<span class="t" style='left:133.00px;top:477.84px;font-size:12px;line-height:16px;color:#1c1c1c;letter-spacing:0.199px;'>Просмотр реферала 3-го уровня, (%):</span>
<span class="t" style='left:741.30px;top:477.84px;font-size:12px;line-height:16px;color:#1c1c1c;letter-spacing:0.930px;'>5%</span>
<span class="t" style='left:133.00px;top:495.84px;font-size:12px;line-height:16px;color:#1c1c1c;letter-spacing:0.280px;'>Просмотр, руб. (MINI):</span>
<span class="t" style='left:735.60px;top:495.84px;font-size:12px;line-height:16px;color:#1c1c1c;letter-spacing:0.167px;'>0.01</span>
<div style="left:132px;top:530px;width:630px;height:17px;background:#4b6e8d;"></div>
<span class="t" style='left:133.00px;top:531.84px;font-size:12px;line-height:16px;color:#fff;font-weight:700;letter-spacing:0.858px;'>Рефералы:</span>
<span class="t" style='left:133.00px;top:549.84px;font-size:12px;line-height:16px;color:#1c1c1c;letter-spacing:0.084px;'>Рефералы 1-го уровня:</span>
<span class="t" style='left:754.10px;top:549.84px;font-size:12px;line-height:16px;color:#10108a;letter-spacing:-0.675px;'>0</span>
<span class="t" style='left:133.00px;top:567.84px;font-size:12px;line-height:16px;color:#1c1c1c;letter-spacing:0.084px;'>Рефералы 2-го уровня:</span>
<span class="t" style='left:754.10px;top:567.84px;font-size:12px;line-height:16px;color:#10108a;letter-spacing:-0.675px;'>0</span>
<span class="t" style='left:133.00px;top:585.84px;font-size:12px;line-height:16px;color:#1c1c1c;letter-spacing:0.084px;'>Рефералы 3-го уровня:</span>
<span class="t" style='left:754.10px;top:585.84px;font-size:12px;line-height:16px;color:#10108a;letter-spacing:-0.675px;'>0</span>
<span class="t" style='left:133.00px;top:603.84px;font-size:12px;line-height:16px;color:#1c1c1c;letter-spacing:0.046px;'>Заработали рефералы 1-го уровня, руб.:</span>
<span class="t" style='left:722.00px;top:603.84px;font-size:12px;line-height:16px;color:#1c1c1c;letter-spacing:0.089px;'>0.0000</span>
<span class="t" style='left:133.00px;top:621.84px;font-size:12px;line-height:16px;color:#1c1c1c;letter-spacing:0.046px;'>Заработали рефералы 2-го уровня, руб.:</span>
<span class="t" style='left:722.00px;top:621.84px;font-size:12px;line-height:16px;color:#1c1c1c;letter-spacing:0.089px;'>0.0000</span>
<span class="t" style='left:133.00px;top:639.84px;font-size:12px;line-height:16px;color:#1c1c1c;letter-spacing:0.046px;'>Заработали рефералы 3-го уровня, руб.:</span>
<span class="t" style='left:722.00px;top:639.84px;font-size:12px;line-height:16px;color:#1c1c1c;letter-spacing:0.089px;'>0.0000</span>
<div style="left:772px;top:138px;width:224px;height:314px;background:linear-gradient(#fff 0,#fff 88%,#ececec 100%);border:1px solid #d6d6d6;border-top:none;border-radius:0 0 5px 5px;box-sizing:border-box;"></div>
<svg style="left:804px;top:147px;" width="15" height="17" viewBox="0 0 15 17"><circle cx="8.500" cy="6.500" r="4" fill="#f2d4b0"/><path d="M3.500 8 C2 2 6 0 9.500 .5 C13 1 14 3.500 13 6 C11.500 4 9.500 4.500 8 3.500 C6.500 5 5.500 6.500 5.500 9Z" fill="#1c1c1c"/><path d="M1 16 C1 12 4 11 8 11.500 C12 11 14 12.500 14 16Z" fill="#ecc834" stroke="#a88010" stroke-width=".8"/></svg>
<span class="t" style='left:820.00px;top:146.84px;font-size:12px;line-height:16px;color:#555;font-weight:700;letter-spacing:1.234px;'>Добро пожаловать,</span>
<div style="left:852px;top:164px;width:58px;height:14px;background:#2a4f9e;"></div>
<span class="t" style='left:852.50px;top:163.84px;font-size:12px;line-height:16px;color:#fff;font-weight:700;letter-spacing:0.434px;'>kkirrillss</span>
<span class="t" style='left:909.50px;top:163.84px;font-size:12px;line-height:16px;color:#555;font-weight:700;letter-spacing:-0.922px;'>!</span>
<svg style="left:844px;top:192px" width="80" height="80" viewBox="0 0 80 80"><defs><linearGradient id="av" x1="0" y1="0" x2="1" y2=".6"><stop offset="0" stop-color="#e2e2e6"/><stop offset=".55" stop-color="#f5f5f7"/><stop offset="1" stop-color="#ebebee"/></linearGradient><filter id="avb"><feGaussianBlur stdDeviation=".7"/></filter></defs><rect x=".5" y=".5" width="79" height="79" fill="url(#av)" stroke="#d2d2d6"/><g filter="url(#avb)"><path d="M24 80 L24 62 L16.500 61 C17 50 19 42 25 38.500 L34 35.500 L46 35.500 L56 38 C63 41 66 50 68 61 L59 62 L58.500 80Z" fill="#a9a9ad"/><path d="M35 30 L35 36.500 C38 38.500 43 38.500 46 36.500 L46 30Z" fill="#c4c4c8"/><ellipse cx="41" cy="22" rx="8.300" ry="11" fill="#d0d0d4"/><path d="M29.500 24 C28 14 31 6 40 5 C48 4.500 52 10 51 17 L50 23 C49 17 47 13 42 12.500 C38 12 35 14 34 18 L33 27 C31 27 30 26 29.500 24Z" fill="#9c9ca0"/><path d="M16 61 L30 60 L44 64 L58 60 L67 61.500 L66 71 L52 76 L40 72 L28 76 L17 72Z" fill="#d6d6da"/><path d="M26 66 L42 70 L58 65" stroke="#bcbcc0" stroke-width="1.500" fill="none"/></g></svg>
<svg style="left:860px;top:272px;" width="18" height="18" viewBox="0 0 18 18"><path d="M9 1.500 L11.300 6.600 L16.800 7.300 L12.700 11 L13.900 16.400 L9 13.600 L4.100 16.400 L5.300 11 L1.200 7.300 L6.700 6.600Z" fill="#fae464" stroke="#d8b42c" stroke-width="1.200" stroke-linejoin="round"/></svg>
<span class="t" style='left:881.50px;top:271.84px;font-size:12px;line-height:16px;color:#10108a;letter-spacing:0.242px;'>0.22</span>
<span class="t" style='left:786.50px;top:292.84px;font-size:12px;line-height:16px;color:#646464;letter-spacing:0.220px;'>Просмотрено:</span>
<span class="t" style='left:966.77px;top:292.84px;font-size:12px;line-height:16px;color:#646464;'>19</span>
<span class="t" style='left:786.50px;top:312.84px;font-size:12px;line-height:16px;color:#646464;letter-spacing:0.398px;'>Рефералов:</span>
<span class="t" style='left:973.62px;top:312.84px;font-size:12px;line-height:16px;color:#646464;'>0</span>
<span class="t" style='left:786.50px;top:332.84px;font-size:12px;line-height:16px;color:#646464;letter-spacing:0.248px;'>Визиты рефералов:</span>
<span class="t" style='left:973.62px;top:332.84px;font-size:12px;line-height:16px;color:#646464;'>0</span>
<span class="t" style='left:786.50px;top:352.84px;font-size:12px;line-height:16px;color:#646464;letter-spacing:0.023px;'>Активация <a style="font-size:13px">АвтоРеферал</a>:</span>
<span class="t" style='left:954.30px;top:353.02px;font-size:11.5px;line-height:16px;color:#22a822;font-weight:700;font-family:"DejaVu Sans", "Liberation Sans", sans-serif;letter-spacing:-0.009px;'>НЕТ</span>
<span class="t" style='left:786.50px;top:374.84px;font-size:12px;line-height:16px;color:#646464;letter-spacing:0.273px;'>На счету (руб.):</span>
<span class="t" style='left:948.80px;top:374.67px;font-size:12.5px;line-height:16px;color:#c81414;font-weight:700;font-family:"DejaVu Sans", "Liberation Sans", sans-serif;letter-spacing:0.039px;'>0.52</span>
<div style="left:784px;top:393px;width:200px;height:1px;background:#c8c8c8;"></div>
<svg style="left:819px;top:398px;" width="16" height="15" viewBox="0 0 16 15"><ellipse cx="6" cy="12" rx="5" ry="2.300" fill="#e8b830" stroke="#9a7010" stroke-width=".8"/><ellipse cx="6" cy="9.500" rx="5" ry="2.300" fill="#f4cc44" stroke="#9a7010" stroke-width=".8"/><ellipse cx="6" cy="7" rx="5" ry="2.300" fill="#fadc60" stroke="#9a7010" stroke-width=".8"/><ellipse cx="11" cy="11.500" rx="3.600" ry="2.800" fill="#f0c43c" stroke="#9a7010" stroke-width=".8"/><path d="M6.500 2.500 H11 V.8 L15.300 4 L11 7.200 V5.500 H6.500Z" fill="#e8482c" stroke="#a82a14" stroke-width=".6"/></svg>
<span class="t" style='left:840.00px;top:397.50px;font-size:13px;line-height:16px;color:#10108a;letter-spacing:-0.241px;'>Вывести средства</span>
<svg style="left:818px;top:420px;" width="17" height="17" viewBox="0 0 17 17"><circle cx="8.500" cy="8.500" r="7" fill="url(#gold)" stroke="#b8860b" stroke-width="1.200"/><text x="8.500" y="12" font-size="9" font-weight="700" text-anchor="middle" fill="#8a5a08" font-family="Liberation Sans,sans-serif">1</text></svg>
<span class="t" style='left:840.00px;top:419.50px;font-size:13px;line-height:16px;color:#10108a;letter-spacing:-0.406px;'>Пополнить баланс</span>
<div style="left:772px;top:457px;width:224px;height:208px;background:linear-gradient(#fff 0,#fff 184px,#ebebeb 206px);border:1px solid #d6d6d6;border-radius:5px;box-sizing:border-box;"></div>
<div style="left:773px;top:458px;width:222px;height:29px;background:linear-gradient(#fff 0,#fcfcfc 15%,#e2e2e2 85%,#e8e8e8 100%);border-radius:4px 4px 0 0;"></div>
<span class="t" style='left:793.80px;top:464.84px;font-size:12px;line-height:16px;color:#2a2a2a;font-weight:700;font-family:"Liberation Sans",sans-serif;letter-spacing:1.000px;'>Реклама (Баннер 100x100)</span>
<svg style="left:834px;top:495px" width="100" height="100" viewBox="0 0 100 100"><defs><radialGradient id="rc" cx=".5" cy=".5" r=".75"><stop offset="0" stop-color="#7fbdea"/><stop offset=".55" stop-color="#4f98d8"/><stop offset="1" stop-color="#2f74bc"/></radialGradient><filter id="rb"><feGaussianBlur stdDeviation=".6"/></filter><filter id="mny" x="-5%" y="-5%" width="110%" height="110%"><feGaussianBlur in="SourceGraphic" stdDeviation=".8" result="b"/><feTurbulence type="fractalNoise" baseFrequency=".22 .3" numOctaves="2" seed="4" result="n"/><feColorMatrix in="n" type="matrix" values="2.4 0 0 0 -.38  2.4 0 0 0 -.38  2.4 0 0 0 -.38  0 0 0 0 1" result="g"/><feComposite in="b" in2="g" operator="arithmetic" k1="1" k2="0" k3="0" k4="0"/></filter></defs><rect width="100" height="100" fill="url(#rc)"/><g stroke="#a8d4f4" stroke-width="3" opacity=".16"><path d="M50 60 L10 0 M50 60 L38 0 M50 60 L70 0 M50 60 L100 10 M50 60 L0 30 M50 60 L100 44"/></g><path d="M8 86 L14 80 L22 74 L34 68 L44 64 L56 64 L66 68 L76 73 L84 80 L88 88 L78 94 L64 97 L44 97 L28 94 L14 92Z" fill="#ccd2bc" filter="url(#mny)"/><g filter="url(#rb)"><circle cx="15.500" cy="41" r="4.800" fill="#3a5cd8"/><path d="M10 48 C14 44 24 45 28 50 L27 56 L31 67 L27.500 68 L23 58 L21 60 L19 69 L15.500 68 L16.500 57 L11 56Z" fill="#3457d0"/><path d="M14 50 L25 49 L26 56 L15 57Z" fill="#d89a2a"/><circle cx="49.500" cy="36" r="4.800" fill="#e83aa4"/><path d="M42 44 C46 40 54 40 58 44 L57 52 L55 54 L56 63 L52.500 63 L50.500 54 L49 54 L47.500 63 L44 63 L44.500 54 L43 52Z" fill="#e0349c"/><path d="M45 47 L55 47 L55 52 L45 52Z" fill="#d8a02a"/><circle cx="86.500" cy="45" r="4.800" fill="#ee4a44"/><path d="M76 52 C80 48 88 49 92 52 L90 60 L84 62 L80 71 L77 70 L79 62 L74 68 L71 66 L76 58Z" fill="#e8403c"/><path d="M76 53 L86 52 L87 58 L77 59Z" fill="#d89a2a"/></g><rect x="3" y="8" width="94" height="15" rx="2" fill="#1f6a1f" opacity=".85"/><text x="50" y="21" text-anchor="middle" font-family="Liberation Sans,sans-serif" font-weight="700" font-size="11.500" textLength="90" lengthAdjust="spacingAndGlyphs" fill="#baf27e" stroke="#1a5a1a" stroke-width="1.600" paint-order="stroke"><tspan font-size="15.500">R</tspan>EF-<tspan font-size="15.500">C</tspan>LUB.COM</text></svg>
<span class="t" style='left:812.50px;top:595.04px;font-size:12px;line-height:16px;color:#666;letter-spacing:0.048px;'>Баннеров в ротаторе: 11</span>
<span class="t" style='left:805.80px;top:622.84px;font-size:12px;line-height:16px;color:#10108a;letter-spacing:0.134px;'><a>Смотреть все</a><span style="color:#333"> | </span><a>Разместить</a></span>
<span class="t" style='left:863.50px;top:637.84px;font-size:12px;line-height:16px;color:#10108a;letter-spacing:0.099px;'><a>баннер</a></span>
<div style="left:0px;top:138px;width:1024px;height:3px;background:linear-gradient(#c4c4c4,#8c8c8c 50%,#a4a4a4);"></div>
<div style="left:0px;top:141px;width:2px;height:542px;background:linear-gradient(90deg,#c4c4c4,#8e8e8e);"></div>
<div style="left:996px;top:141px;width:5px;height:520px;background:#e9e9ec;"></div>
<div style="left:1001px;top:141px;width:21px;height:520px;background:linear-gradient(90deg,#dce6f8,#f0f5fe 45%,#fafcff);"></div>
<div style="left:1002px;top:141px;width:20px;height:20px;background:linear-gradient(#e9f1fd,#c9daf6);border:1px solid #a4bce0;border-radius:3px;box-sizing:border-box;"></div>
<svg style="left:1002px;top:141px;" width="20" height="20" viewBox="0 0 20 20"><path d="M6.0 12.0 L10.0 8.0 L14.0 12.0" fill="none" stroke="#4a5a7a" stroke-width="2.200"/></svg>
<div style="left:1002px;top:640px;width:20px;height:20px;background:linear-gradient(#e9f1fd,#c9daf6);border:1px solid #a4bce0;border-radius:3px;box-sizing:border-box;"></div>
<svg style="left:1002px;top:640px;" width="20" height="20" viewBox="0 0 20 20"><path d="M6.0 8.0 L10.0 12.0 L14.0 8.0" fill="none" stroke="#4a5a7a" stroke-width="2.200"/></svg>
<div style="left:1002px;top:219px;width:20px;height:125px;background:linear-gradient(90deg,#eaf2fe,#cfe0fa 50%,#b9d0f4);border:1px solid #9db8e4;border-radius:3px;box-sizing:border-box;"></div>
<svg style="left:1007px;top:276px;" width="9" height="10" viewBox="0 0 9 10"><path d="M1 1.500 H8 M1 3.500 H8 M1 5.500 H8 M1 7.500 H8" stroke="#8aa4d0" stroke-width="1"/></svg>
<div style="left:2px;top:661px;width:998px;height:22px;background:linear-gradient(#e4ecf8,#f6f9ff 40%,#fbfdff);border-top:1px solid #e4eaf4;box-sizing:border-box;"></div>
<div style="left:3px;top:662px;width:20px;height:20px;background:linear-gradient(#e9f1fd,#c9daf6);border:1px solid #a4bce0;border-radius:3px;box-sizing:border-box;"></div>
<svg style="left:3px;top:662px;" width="20" height="20" viewBox="0 0 20 20"><path d="M12.0 6.0 L8.0 10.0 L12.0 14.0" fill="none" stroke="#4a5a7a" stroke-width="2.200"/></svg>
<div style="left:980px;top:662px;width:20px;height:20px;background:linear-gradient(#e9f1fd,#c9daf6);border:1px solid #a4bce0;border-radius:3px;box-sizing:border-box;"></div>
<svg style="left:980px;top:662px;" width="20" height="20" viewBox="0 0 20 20"><path d="M8.0 6.0 L12.0 10.0 L8.0 14.0" fill="none" stroke="#4a5a7a" stroke-width="2.200"/></svg>
<div style="left:135px;top:662px;width:845px;height:20px;background:linear-gradient(#eaf2fe,#cfe0fa 50%,#b9d0f4);border:1px solid #9db8e4;border-radius:3px;box-sizing:border-box;"></div>
<svg style="left:553px;top:668px;" width="10" height="9" viewBox="0 0 10 9"><path d="M1.500 1 V8 M3.500 1 V8 M5.500 1 V8 M7.500 1 V8" stroke="#8aa4d0" stroke-width="1"/></svg>
<div style="left:1000px;top:661px;width:24px;height:22px;background:#e6e6ea;"></div>
<div style="left:0px;top:683px;width:1024px;height:25px;background:linear-gradient(90deg,#f2f2f5,#e6e6ea);"></div>
<div style="left:0px;top:682px;width:1024px;height:1px;background:#fbfbfb;"></div>
<div style="left:353px;top:684px;width:117px;height:23px;background:#fff;border:1px solid #b4b4b4;border-radius:3px;box-sizing:border-box;"></div>
<svg style="left:4px;top:686.5px;" width="15" height="17" viewBox="0 0 15 17"><path d="M3.5 1.5 H11 Q13.5 1.5 13.5 4 V11 Q13.5 15.5 9 15.5 H3.5 Q1.5 15.5 1.5 13.5 V3.5 Q1.5 1.5 3.5 1.5Z" fill="url(#pg)" stroke="#2f6fd0" stroke-width="1.2"/></svg>
<span class="t" style='left:23.00px;top:685.65px;font-size:14px;line-height:20px;color:#000;letter-spacing:0.111px;'>PROFITC...</span>
<div style="left:100px;top:687px;width:17px;height:17px;background:linear-gradient(135deg,#7fa8e8,#3f74d0);border:1px solid #2f5fb8;border-radius:2px;box-sizing:border-box;"></div>
<svg style="left:100px;top:687px;" width="17" height="17" viewBox="0 0 17 17"><path d="M5.500 5.500 L11.500 11.500 M11.500 5.500 L5.500 11.500" stroke="#fff" stroke-width="2.200"/></svg>
<svg style="left:121px;top:686.5px;" width="15" height="17" viewBox="0 0 15 17"><path d="M3.5 1.5 H11 Q13.5 1.5 13.5 4 V11 Q13.5 15.5 9 15.5 H3.5 Q1.5 15.5 1.5 13.5 V3.5 Q1.5 1.5 3.5 1.5Z" fill="url(#pg)" stroke="#2f6fd0" stroke-width="1.2"/></svg>
<span class="t" style='left:140.50px;top:685.65px;font-size:14px;line-height:20px;color:#000;letter-spacing:-0.111px;'>Система ...</span>
<div style="left:217.5px;top:687px;width:17px;height:17px;background:linear-gradient(135deg,#7fa8e8,#3f74d0);border:1px solid #2f5fb8;border-radius:2px;box-sizing:border-box;"></div>
<svg style="left:217.5px;top:687px;" width="17" height="17" viewBox="0 0 17 17"><path d="M5.500 5.500 L11.500 11.500 M11.500 5.500 L5.500 11.500" stroke="#fff" stroke-width="2.200"/></svg>
<svg style="left:238.5px;top:686.5px;" width="15" height="17" viewBox="0 0 15 17"><path d="M3.5 1.5 H11 Q13.5 1.5 13.5 4 V11 Q13.5 15.5 9 15.5 H3.5 Q1.5 15.5 1.5 13.5 V3.5 Q1.5 1.5 3.5 1.5Z" fill="url(#pg)" stroke="#2f6fd0" stroke-width="1.2"/></svg>
<span class="t" style='left:257.50px;top:685.65px;font-size:14px;line-height:20px;color:#000;letter-spacing:-0.111px;'>Система ...</span>
<div style="left:334px;top:687px;width:17px;height:17px;background:linear-gradient(135deg,#7fa8e8,#3f74d0);border:1px solid #2f5fb8;border-radius:2px;box-sizing:border-box;"></div>
<svg style="left:334px;top:687px;" width="17" height="17" viewBox="0 0 17 17"><path d="M5.500 5.500 L11.500 11.500 M11.500 5.500 L5.500 11.500" stroke="#fff" stroke-width="2.200"/></svg>
<svg style="left:356.5px;top:686.5px;" width="15" height="17" viewBox="0 0 15 17"><path d="M3.5 1.5 H11 Q13.5 1.5 13.5 4 V11 Q13.5 15.5 9 15.5 H3.5 Q1.5 15.5 1.5 13.5 V3.5 Q1.5 1.5 3.5 1.5Z" fill="url(#pg)" stroke="#2f6fd0" stroke-width="1.2"/></svg>
<span class="t" style='left:374.50px;top:685.65px;font-size:14px;line-height:20px;color:#000;letter-spacing:0.121px;'>BEST-SAR...</span>
<div style="left:452px;top:687px;width:17px;height:17px;background:linear-gradient(135deg,#7fa8e8,#3f74d0);border:1px solid #2f5fb8;border-radius:2px;box-sizing:border-box;"></div>
<svg style="left:452px;top:687px;" width="17" height="17" viewBox="0 0 17 17"><path d="M5.500 5.500 L11.500 11.500 M11.500 5.500 L5.500 11.500" stroke="#fff" stroke-width="2.200"/></svg>
<svg style="left:472px;top:689px;" width="15" height="10" viewBox="0 0 15 10"><rect x="0" y="5" width="15" height="4" fill="#5aa83a"/><path d="M1 6 L5 1.500 L9 6Z" fill="#7a7a7a"/><rect x="2.500" y="5" width="5" height="3" fill="#9a9a9a"/><rect x="8" y="3" width="7" height="2.500" fill="#dfeefe"/></svg>
<span class="t" style='left:491.50px;top:685.65px;font-size:14px;line-height:20px;color:#000;letter-spacing:-0.339px;'>Залить К...</span>
<div style="left:568px;top:687px;width:17px;height:17px;background:linear-gradient(135deg,#7fa8e8,#3f74d0);border:1px solid #2f5fb8;border-radius:2px;box-sizing:border-box;"></div>
<svg style="left:568px;top:687px;" width="17" height="17" viewBox="0 0 17 17"><path d="M5.500 5.500 L11.500 11.500 M11.500 5.500 L5.500 11.500" stroke="#fff" stroke-width="2.200"/></svg>
<div style="left:0px;top:708px;width:1024px;height:23px;background:linear-gradient(90deg,#f6f6f8,#eeeef2);"></div>
<div style="left:0px;top:708px;width:1024px;height:1px;background:#d4d4d4;"></div>
<div style="left:0px;top:709px;width:1024px;height:1px;background:#fff;"></div>
<span class="t" style='left:2.00px;top:711.15px;font-size:14px;line-height:20px;color:#000;letter-spacing:-0.010px;'>Готово</span>
<div style="left:829px;top:711px;width:1px;height:18px;background:#d6d6da;"></div>
<div style="left:830px;top:711px;width:1px;height:18px;background:#fdfdfe;"></div>
<div style="left:997px;top:711px;width:1px;height:18px;background:#d6d6da;"></div>
<div style="left:998px;top:711px;width:1px;height:18px;background:#fdfdfe;"></div>
<svg style="left:1004px;top:713px;" width="17" height="15" viewBox="0 0 17 15"><rect x="1.500" y="6.500" width="9.500" height="7.500" fill="#a4562e" stroke="#7a6ac8" stroke-width="1.400"/><path d="M9.500 6 V4 C9.500 .8 15 .8 15 4 V7" fill="none" stroke="#8a7ad8" stroke-width="1.800"/></svg>
<div style="left:0px;top:730px;width:1024px;height:38px;background:linear-gradient(#12223a 0,#12223a 1px,#8aa6ce 1px,#6a8cc0 3.700px,#2a4a94 3.700px,#2a4a94 5px,#6cacf2 5px,#5e9cec 9px,#4e8ae2 19px,#3f76d8 20px,#3869cd 28px,#3060c2 34px,#2a54b0 38px);"></div>
<div style="left:0px;top:729px;width:1024px;height:1px;background:#8a94b6;"></div>
<div style="left:-12px;top:736px;width:114px;height:32px;background:linear-gradient(#8fd08a 0,#63b060 2px,#55a655 6px,#469c48 14px,#2a9a2c 17px,#1fa022 24px,#1cb41f 32px);border-radius:0 13px 13px 0/0 16px 16px 0;box-shadow:inset -2px 0 3px rgba(0,40,0,.35);"></div>
<svg style="left:10px;top:742px;" width="19" height="20" viewBox="0 0 19 20"><path d="M2 4 C5 2 7 2 9 4 L7.500 10 C5.500 8 3.500 8 .5 10Z" fill="#e8502a"/><path d="M10.500 4.500 C13 6.500 15 6.500 18 4.500 L16.500 10.500 C13.500 12.500 11.500 12.500 9 10.500Z" fill="#6ab82a"/><path d="M.5 11.500 C3.500 9.500 5.500 9.500 7.500 11.500 L6 17.500 C4 15.500 2 15.500 -1 17.500Z" fill="#3a7ae8"/><path d="M8.500 12 C11 14 13 14 16 12 L14.500 18 C11.500 20 9.500 20 7 18Z" fill="#f0c020"/></svg>
<span class="t" style='left:30.00px;top:742.88px;font-size:22px;line-height:20px;color:#fff;font-weight:700;font-family:"Liberation Sans",sans-serif;font-style:italic;letter-spacing:-0.766px;text-shadow:1px 1px 1px #1c4a1c;'>пуск</span>
<svg style="left:110px;top:738px;" width="7" height="30" viewBox="0 0 7 30"><circle cx="2.8" cy="3" r="1" fill="#24459a" opacity=".7"/><circle cx="2.0" cy="2.2" r="1" fill="#a4c8fa"/><circle cx="5.4" cy="6" r="1" fill="#24459a" opacity=".7"/><circle cx="4.6" cy="5.2" r="1" fill="#a4c8fa"/><circle cx="2.8" cy="9" r="1" fill="#24459a" opacity=".7"/><circle cx="2.0" cy="8.2" r="1" fill="#a4c8fa"/><circle cx="5.4" cy="12" r="1" fill="#24459a" opacity=".7"/><circle cx="4.6" cy="11.2" r="1" fill="#a4c8fa"/><circle cx="2.8" cy="15" r="1" fill="#24459a" opacity=".7"/><circle cx="2.0" cy="14.2" r="1" fill="#a4c8fa"/><circle cx="5.4" cy="18" r="1" fill="#24459a" opacity=".7"/><circle cx="4.6" cy="17.2" r="1" fill="#a4c8fa"/><circle cx="2.8" cy="21" r="1" fill="#24459a" opacity=".7"/><circle cx="2.0" cy="20.2" r="1" fill="#a4c8fa"/><circle cx="5.4" cy="24" r="1" fill="#24459a" opacity=".7"/><circle cx="4.6" cy="23.2" r="1" fill="#a4c8fa"/><circle cx="2.8" cy="27" r="1" fill="#24459a" opacity=".7"/><circle cx="2.0" cy="26.2" r="1" fill="#a4c8fa"/></svg>
<svg style="left:123px;top:742px;" width="19" height="19" viewBox="0 0 19 19"><path d="M5 10.500 H14.500 C14.500 5 5.500 4.500 4.800 10.500 C4.500 16.500 12.500 17 14.500 13" fill="none" stroke="#2c8ae6" stroke-width="3.200"/><path d="M5 10.500 H14 C14 6.500 6.500 6 5.500 10" fill="none" stroke="#8ad0ff" stroke-width="1" opacity=".8"/><path d="M1.500 15 C-2 8 9 -1 17.500 3.500" fill="none" stroke="#f2c53a" stroke-width="1.800"/></svg>
<svg style="left:149px;top:744px;" width="21" height="17" viewBox="0 0 21 17"><rect x=".7" y=".7" width="19.600" height="14" fill="#3f72cc" stroke="#9cb0d0" stroke-width="1.400"/><path d="M2 2 H19 V8 L2 12Z" fill="#5a92e4" opacity=".7"/><rect x="3" y="14.700" width="15" height="1.800" fill="#7a8aa8"/></svg>
<svg style="left:177px;top:743px;" width="19" height="18" viewBox="0 0 19 18"><rect x=".5" y="1.500" width="17" height="15" fill="#fff" stroke="#8a8a8a"/><rect x="2" y="5" width="7" height="9" fill="#2a8a5a"/><path d="M11 5 H16 M11 8 H16 M11 11 H16" stroke="#4a4a4a" stroke-width="1.400"/><rect x="14" y="0" width="3" height="4" fill="#e8d04a"/></svg>
<span class="t" style='left:210.50px;top:736.50px;font-size:13px;line-height:16px;color:#fff;font-weight:700;letter-spacing:0.438px;'>»</span>
<svg style="left:230px;top:738px;" width="7" height="30" viewBox="0 0 7 30"><circle cx="2.8" cy="3" r="1" fill="#24459a" opacity=".7"/><circle cx="2.0" cy="2.2" r="1" fill="#a4c8fa"/><circle cx="5.4" cy="6" r="1" fill="#24459a" opacity=".7"/><circle cx="4.6" cy="5.2" r="1" fill="#a4c8fa"/><circle cx="2.8" cy="9" r="1" fill="#24459a" opacity=".7"/><circle cx="2.0" cy="8.2" r="1" fill="#a4c8fa"/><circle cx="5.4" cy="12" r="1" fill="#24459a" opacity=".7"/><circle cx="4.6" cy="11.2" r="1" fill="#a4c8fa"/><circle cx="2.8" cy="15" r="1" fill="#24459a" opacity=".7"/><circle cx="2.0" cy="14.2" r="1" fill="#a4c8fa"/><circle cx="5.4" cy="18" r="1" fill="#24459a" opacity=".7"/><circle cx="4.6" cy="17.2" r="1" fill="#a4c8fa"/><circle cx="2.8" cy="21" r="1" fill="#24459a" opacity=".7"/><circle cx="2.0" cy="20.2" r="1" fill="#a4c8fa"/><circle cx="5.4" cy="24" r="1" fill="#24459a" opacity=".7"/><circle cx="4.6" cy="23.2" r="1" fill="#a4c8fa"/><circle cx="2.8" cy="27" r="1" fill="#24459a" opacity=".7"/><circle cx="2.0" cy="26.2" r="1" fill="#a4c8fa"/></svg>
<div style="left:241px;top:738px;width:74px;height:27px;background:linear-gradient(#5a92ec,#3c78e0 20%,#3470dc 80%,#2a5fc8);border:1px solid #2a5cc4;border-top-color:#7aaaf4;border-radius:3px;box-sizing:border-box;"></div>
<span class="t" style='left:273.50px;top:740.65px;font-size:14px;line-height:20px;color:#fff;letter-spacing:-0.562px;'>Vi...</span>
<div style="left:317px;top:738px;width:74px;height:27px;background:linear-gradient(#5a92ec,#3c78e0 20%,#3470dc 80%,#2a5fc8);border:1px solid #2a5cc4;border-top-color:#7aaaf4;border-radius:3px;box-sizing:border-box;"></div>
<span class="t" style='left:349.00px;top:740.65px;font-size:14px;line-height:20px;color:#fff;letter-spacing:-0.075px;'>Ad...</span>
<div style="left:393px;top:738px;width:74px;height:27px;background:linear-gradient(#5a92ec,#3c78e0 20%,#3470dc 80%,#2a5fc8);border:1px solid #2a5cc4;border-top-color:#7aaaf4;border-radius:3px;box-sizing:border-box;"></div>
<span class="t" style='left:426.00px;top:740.65px;font-size:14px;line-height:20px;color:#fff;letter-spacing:0.006px;'>Je...</span>
<div style="left:469px;top:738px;width:74px;height:27px;background:linear-gradient(#5a92ec,#3c78e0 20%,#3470dc 80%,#2a5fc8);border:1px solid #2a5cc4;border-top-color:#7aaaf4;border-radius:3px;box-sizing:border-box;"></div>
<span class="t" style='left:502.00px;top:740.65px;font-size:14px;line-height:20px;color:#fff;letter-spacing:-0.478px;'>[П...</span>
<div style="left:545px;top:738px;width:74px;height:27px;background:linear-gradient(#1c3c9a,#1f44a8 50%,#2450b8);border:1px solid #17327f;border-radius:3px;box-sizing:border-box;box-shadow:inset 1px 1px 2px rgba(0,0,0,.35);"></div>
<span class="t" style='left:578.50px;top:740.65px;font-size:14px;line-height:20px;color:#fff;letter-spacing:-0.322px;'>BE...</span>
<svg style="left:250px;top:741px;" width="20" height="20" viewBox="0 0 20 20"><ellipse cx="10" cy="10" rx="9.500" ry="9" fill="#fff" stroke="#c8c8c8"/><text x="1.500" y="9.500" font-family="Liberation Sans,sans-serif" font-size="8" font-weight="700" font-style="italic" fill="#2a2a9a">VIP</text><text x="8" y="17" font-family="Liberation Sans,sans-serif" font-size="8.500" font-weight="700" font-style="italic" fill="#e8202a">IP</text><rect x="2" y="12" width="5" height="6" fill="#e8b02a"/></svg>
<svg style="left:327px;top:743px;" width="17" height="17" viewBox="0 0 17 17"><rect x=".75" y=".75" width="15.500" height="15.500" fill="#1a1a1a" stroke="#e8e02a" stroke-width="1.500"/><text x="8.500" y="13.500" text-anchor="middle" font-family="Liberation Sans,sans-serif" font-size="13" font-weight="700" fill="#e8e02a">A</text></svg>
<svg style="left:400px;top:742px;" width="23" height="19" viewBox="0 0 23 19"><path d="M1 9 C1 5 7 5 9 7 L8 9 C6 8 4 8 4 9 C4 11 9 10 9 13.500 C9 17 3 17 1 15 L2 13 C4 14.500 6 14.500 6 13.500 C6 12 1 12.500 1 9Z" fill="#10209c" stroke="#10209c" stroke-width="1.200"/><text x="9.500" y="8" font-family="Liberation Sans,sans-serif" font-size="9" font-weight="700" fill="#10209c" stroke="#10209c" stroke-width=".5">ac</text><text x="11" y="18" font-family="Liberation Sans,sans-serif" font-size="9" font-weight="700" fill="#10209c" stroke="#10209c" stroke-width=".5">rf</text></svg>
<svg style="left:478px;top:741px;" width="20" height="20" viewBox="0 0 20 20"><rect width="20" height="20" fill="#0a1a2a"/><path d="M10 1 L12.500 7.500 L19 7.500 L14 12 L16 19 L10 15 L4 19 L6 12 L1 7.500 L7.500 7.500Z" fill="#2ac8e8" stroke="#0a6a9a" stroke-width=".8"/><path d="M0 0 L6 4 L2 8Z M20 0 L14 4 L18 8Z" fill="#1a8ab8"/></svg>
<svg style="left:554px;top:741px;" width="22" height="21" viewBox="0 0 21 20"><path d="M0.500 9.500 C2 7.500 4.500 6 7 5.500 L8 2 L10 .8 L11.500 3 L13.500 .5 L15.500 2 L16 4.500 L20 5.500 L19.500 13 L17.500 18 L14.500 13 L9 14 L4 13 C2 12.500 1 11 0.500 9.500Z" fill="#35b035" stroke="#1f7a1f" stroke-width=".9" stroke-linejoin="round"/><path d="M12 12.500 L14.500 12.500 L17.500 19 L15 19.500Z" fill="#e0452f" stroke="#8a2416" stroke-width=".6"/><ellipse cx="9.500" cy="5" rx="1.500" ry="1.900" fill="#eaffea"/><ellipse cx="13.500" cy="4.500" rx="1.500" ry="1.900" fill="#eaffea"/><circle cx="9.800" cy="5.500" r=".8" fill="#0a3a0a"/><circle cx="13.800" cy="5" r=".8" fill="#0a3a0a"/><path d="M3 10.500 C6 12 10 12 14 10" fill="none" stroke="#0f5a0f" stroke-width=".9"/></svg>
<svg style="left:629px;top:738px;" width="7" height="30" viewBox="0 0 7 30"><circle cx="2.8" cy="3" r="1" fill="#24459a" opacity=".7"/><circle cx="2.0" cy="2.2" r="1" fill="#a4c8fa"/><circle cx="5.4" cy="6" r="1" fill="#24459a" opacity=".7"/><circle cx="4.6" cy="5.2" r="1" fill="#a4c8fa"/><circle cx="2.8" cy="9" r="1" fill="#24459a" opacity=".7"/><circle cx="2.0" cy="8.2" r="1" fill="#a4c8fa"/><circle cx="5.4" cy="12" r="1" fill="#24459a" opacity=".7"/><circle cx="4.6" cy="11.2" r="1" fill="#a4c8fa"/><circle cx="2.8" cy="15" r="1" fill="#24459a" opacity=".7"/><circle cx="2.0" cy="14.2" r="1" fill="#a4c8fa"/><circle cx="5.4" cy="18" r="1" fill="#24459a" opacity=".7"/><circle cx="4.6" cy="17.2" r="1" fill="#a4c8fa"/><circle cx="2.8" cy="21" r="1" fill="#24459a" opacity=".7"/><circle cx="2.0" cy="20.2" r="1" fill="#a4c8fa"/><circle cx="5.4" cy="24" r="1" fill="#24459a" opacity=".7"/><circle cx="4.6" cy="23.2" r="1" fill="#a4c8fa"/><circle cx="2.8" cy="27" r="1" fill="#24459a" opacity=".7"/><circle cx="2.0" cy="26.2" r="1" fill="#a4c8fa"/></svg>
<div style="left:641px;top:742px;width:18px;height:17px;background:#4a6ec4;"></div>
<span class="t" style='left:642.50px;top:743.50px;font-size:13px;line-height:16px;color:#fff;letter-spacing:-0.070px;'>EN</span>
<svg style="left:667px;top:738px;" width="7" height="30" viewBox="0 0 7 30"><circle cx="2.8" cy="3" r="1" fill="#24459a" opacity=".7"/><circle cx="2.0" cy="2.2" r="1" fill="#a4c8fa"/><circle cx="5.4" cy="6" r="1" fill="#24459a" opacity=".7"/><circle cx="4.6" cy="5.2" r="1" fill="#a4c8fa"/><circle cx="2.8" cy="9" r="1" fill="#24459a" opacity=".7"/><circle cx="2.0" cy="8.2" r="1" fill="#a4c8fa"/><circle cx="5.4" cy="12" r="1" fill="#24459a" opacity=".7"/><circle cx="4.6" cy="11.2" r="1" fill="#a4c8fa"/><circle cx="2.8" cy="15" r="1" fill="#24459a" opacity=".7"/><circle cx="2.0" cy="14.2" r="1" fill="#a4c8fa"/><circle cx="5.4" cy="18" r="1" fill="#24459a" opacity=".7"/><circle cx="4.6" cy="17.2" r="1" fill="#a4c8fa"/><circle cx="2.8" cy="21" r="1" fill="#24459a" opacity=".7"/><circle cx="2.0" cy="20.2" r="1" fill="#a4c8fa"/><circle cx="5.4" cy="24" r="1" fill="#24459a" opacity=".7"/><circle cx="4.6" cy="23.2" r="1" fill="#a4c8fa"/><circle cx="2.8" cy="27" r="1" fill="#24459a" opacity=".7"/><circle cx="2.0" cy="26.2" r="1" fill="#a4c8fa"/></svg>
<span class="t" style='left:676.00px;top:740.65px;font-size:14px;line-height:20px;color:#fff;letter-spacing:-0.164px;'>AVerTV</span>
<span class="t" style='left:730.50px;top:735.50px;font-size:13px;line-height:16px;color:#fff;font-weight:700;letter-spacing:0.438px;'>»</span>
<div style="left:756px;top:735px;width:268px;height:33px;background:linear-gradient(#f2f6fc 0,#dfe9f8 5px,#c2d6f2 14px,#a4c2ec 22px,#86aee6 29px,#6a96d8 33px);border-left:1px solid #7a9ad0;box-sizing:border-box;"></div>
<svg style="left:746px;top:741px;" width="19" height="19" viewBox="0 0 19 19"><circle cx="9.500" cy="9.500" r="8.500" fill="#d4e6fc" stroke="#3a6ac8" stroke-width="1.400"/><path d="M11 5.500 L7 9.500 L11 13.500" fill="none" stroke="#2a4aa8" stroke-width="2.200"/></svg>
<svg style="left:767px;top:741px;" width="20" height="20" viewBox="0 0 20 20"><rect x="7" y="1" width="12" height="10" fill="#2a4ad0" stroke="#c8d4ec" stroke-width="1.200"/><rect x="1" y="5" width="12" height="10" fill="#3a6ae8" stroke="#c8d4ec" stroke-width="1.200"/><rect x="3" y="16" width="9" height="2.500" fill="#c8c8c8"/></svg>
<svg style="left:789px;top:741px;" width="21" height="21" viewBox="0 0 21 21"><circle cx="9" cy="9" r="7.500" fill="none" stroke="#f08a2a" stroke-width="2.400"/><circle cx="9" cy="9" r="3" fill="none" stroke="#f08a2a" stroke-width="2"/><rect x="8" y="10" width="12" height="9" fill="#fff" stroke="#4a4a4a" stroke-width="1"/><path d="M8 10 L14 15 L20 10" fill="none" stroke="#4a4a4a"/></svg>
<svg style="left:811px;top:741px;" width="20" height="20" viewBox="0 0 20 20"><circle cx="16.0" cy="10.0" r="3.300" fill="#f4a0a0" stroke="#d8402a" stroke-width="1"/><circle cx="14.2" cy="14.2" r="3.300" fill="#f4a0a0" stroke="#d8402a" stroke-width="1"/><circle cx="10.0" cy="16.0" r="3.300" fill="#f4a0a0" stroke="#d8402a" stroke-width="1"/><circle cx="5.8" cy="14.2" r="3.300" fill="#f4a0a0" stroke="#d8402a" stroke-width="1"/><circle cx="4.0" cy="10.0" r="3.300" fill="#f4a0a0" stroke="#d8402a" stroke-width="1"/><circle cx="5.8" cy="5.8" r="3.300" fill="#f4a0a0" stroke="#d8402a" stroke-width="1"/><circle cx="10.0" cy="4.0" r="3.300" fill="#f4a0a0" stroke="#d8402a" stroke-width="1"/><circle cx="14.2" cy="5.8" r="3.300" fill="#f4a0a0" stroke="#d8402a" stroke-width="1"/><circle cx="10" cy="10" r="3" fill="#e8502a"/></svg>
<svg style="left:834px;top:741px;" width="20" height="20" viewBox="0 0 20 20"><rect x="7" y="1" width="12" height="10" fill="#2a4ad0" stroke="#c8d4ec" stroke-width="1.200"/><rect x="1" y="5" width="12" height="10" fill="#3a6ae8" stroke="#c8d4ec" stroke-width="1.200"/><rect x="3" y="16" width="9" height="2.500" fill="#c8c8c8"/></svg>
<span class="t" style='left:859.50px;top:741.38px;font-size:22px;line-height:20px;color:#9ad82a;font-weight:700;letter-spacing:-0.781px;text-shadow:0 0 1px #3a6a0a;'>$</span>
<svg style="left:880px;top:741px;" width="18" height="20" viewBox="0 0 18 20"><path d="M9 1 L16 9 H12 V14 H6 V9 H2Z" fill="#4ac83a" stroke="#2a8a1a" stroke-width="1"/><rect x="4" y="13" width="10" height="6" fill="#e89a2a"/></svg>
<svg style="left:899px;top:740px;" width="20" height="21" viewBox="0 0 20 21"><circle cx="10" cy="11" r="9" fill="#f0c820" stroke="#a87a08" stroke-width="1"/><rect x="6" y="5" width="8" height="13" rx="1" fill="#f8e060" stroke="#3a2a08" stroke-width="1.300"/><rect x="7.500" y="7" width="5" height="4" fill="#3a2a08"/><path d="M12 5 V2" stroke="#3a2a08" stroke-width="1.400"/></svg>
<svg style="left:921px;top:741px;" width="21" height="20" viewBox="0 0 21 20"><path d="M1 7 H5 L10 2 V18 L5 13 H1Z" fill="#d8d8d8" stroke="#6a6a6a" stroke-width="1"/><path d="M12.500 6 C14.500 8 14.500 12 12.500 14 M15 3.500 C18.500 7 18.500 13 15 16.500" fill="none" stroke="#3ac84a" stroke-width="1.600"/></svg>
<svg style="left:943px;top:740px;" width="20" height="21" viewBox="0 0 20 21"><rect x="1" y="3" width="14" height="16" fill="#f4f4f4" stroke="#2a2a2a" stroke-width="1.200"/><path d="M3 7 H12 M3 10 H12 M3 13 H10" stroke="#6a6a6a" stroke-width="1"/><path d="M18 1 L8 13 L7 17 L10.500 15 L20 3Z" fill="#3a3a3a" stroke="#fff" stroke-width=".6"/></svg>
<span class="t" style='left:975.60px;top:741.15px;font-size:14px;line-height:20px;color:#16203a;letter-spacing:0.130px;'>6:15</span>
<svg style="left:768px;top:650px;" width="256" height="46" viewBox="0 0 256 46"><path d="M50.5 2 V40" stroke="#6e6e6e" stroke-width="1"/><path d="M110.5 2 V40" stroke="#6e6e6e" stroke-width="1"/><path d="M170.5 2 V40" stroke="#6e6e6e" stroke-width="1"/><path d="M230.5 2 V40" stroke="#6e6e6e" stroke-width="1"/><path d="M37 7.500 H256 M37 22.500 H256" stroke="#7c7c7c" stroke-width="1"/><path d="M38 36.500 L66 36 L68.300 35 L70 31.500 L75 31 L77 28 L80.500 17 L82.500 24 L84.300 31 L86.500 24 L88.600 17.500 L90.500 24 L93.700 32 L96 31 L98.800 30 L101 28 L103 22 L105.600 15.300 L107.500 19 L109.500 23 L111 21 L113.300 22 L115 28 L117.800 35.500 L256 36 L256 37.500 L38 37.500Z" fill="#efca62" stroke="#d8aa3c" stroke-width=".7"/><path d="M37.500 6 V38 M33 7.500 H38 M33 22.500 H38 M33 37 H256" stroke="#3a3020" stroke-width="1" fill="none"/></svg>
<span class="t" style='left:771.50px;top:649.24px;font-size:10px;line-height:16px;color:#111;font-family:"DejaVu Sans Condensed","Liberation Sans",sans-serif;letter-spacing:-0.747px;'>2000,0</span>
<span class="t" style='left:771.50px;top:663.74px;font-size:10px;line-height:16px;color:#111;font-family:"DejaVu Sans Condensed","Liberation Sans",sans-serif;letter-spacing:-0.747px;'>1000,0</span>
<span class="t" style='left:785.50px;top:678.03px;font-size:10px;line-height:16px;color:#111;font-family:"DejaVu Sans Condensed","Liberation Sans",sans-serif;letter-spacing:-0.438px;'>0,0</span>
<span class="t" style='left:809.00px;top:655.18px;font-size:9px;line-height:16px;color:#111;font-family:"DejaVu Sans Condensed","Liberation Sans",sans-serif;letter-spacing:-0.355px;'>Кб/с</span>
<span class="t" style='left:800.00px;top:686.83px;font-size:10px;line-height:16px;color:#111;font-family:"DejaVu Sans Condensed","Liberation Sans",sans-serif;letter-spacing:-0.613px;'>06:15:00</span>
<span class="t" style='left:860.00px;top:686.83px;font-size:10px;line-height:16px;color:#111;font-family:"DejaVu Sans Condensed","Liberation Sans",sans-serif;letter-spacing:-0.613px;'>06:14:00</span>
<span class="t" style='left:920.00px;top:686.83px;font-size:10px;line-height:16px;color:#111;font-family:"DejaVu Sans Condensed","Liberation Sans",sans-serif;letter-spacing:-0.613px;'>06:13:00</span>
<span class="t" style='left:980.00px;top:686.83px;font-size:10px;line-height:16px;color:#111;font-family:"DejaVu Sans Condensed","Liberation Sans",sans-serif;letter-spacing:-0.613px;'>06:12:00</span>
</body></html>
